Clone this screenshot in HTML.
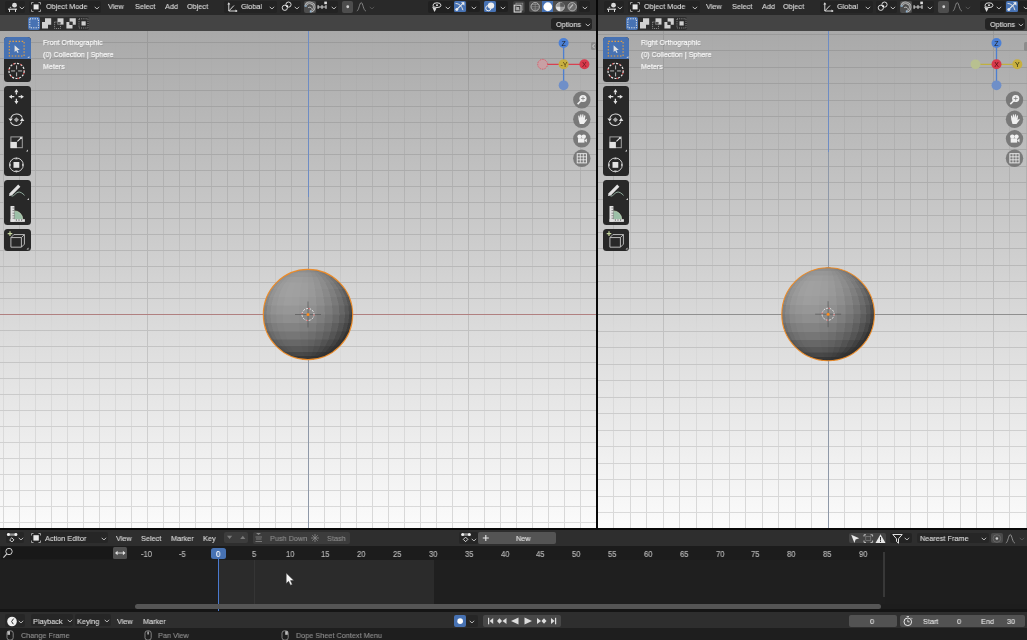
<!DOCTYPE html><html><head><meta charset="utf-8"><style>
*{margin:0;padding:0;box-sizing:border-box}
body{width:1027px;height:640px;overflow:hidden;background:#1f1f1f;position:relative;font-family:"Liberation Sans",sans-serif;}
.a{position:absolute}
.t{position:absolute;white-space:nowrap;will-change:transform;transform:scaleX(0.9);transform-origin:0 0;-webkit-text-stroke:0.15px currentColor}
</style></head><body>
<svg class="a" style="left:0px;top:31px" width="596" height="497" viewBox="0 0 596 497" shape-rendering="crispEdges"><defs><linearGradient id="bg0" x1="0" y1="0" x2="0" y2="1"><stop offset="0" stop-color="#a9a9a9"/><stop offset="0.5" stop-color="#d3d3d3"/><stop offset="1" stop-color="#fbfbfb"/></linearGradient><linearGradient id="hg0" x1="0" y1="0" x2="0" y2="497" gradientUnits="userSpaceOnUse"><stop offset="0" stop-color="#999999"/><stop offset="1" stop-color="#dcdcdc"/></linearGradient><linearGradient id="vg0" x1="0" y1="0" x2="0" y2="497" gradientUnits="userSpaceOnUse"><stop offset="0" stop-color="#a2a2a2" stop-opacity="0.05"/><stop offset="0.12" stop-color="#a2a2a2" stop-opacity="0.25"/><stop offset="0.3" stop-color="#a2a2a2" stop-opacity="0.55"/><stop offset="0.6" stop-color="#d8d8d8" stop-opacity="0.85"/><stop offset="1" stop-color="#d8d8d8" stop-opacity="1"/></linearGradient></defs><rect width="596" height="497" fill="url(#bg0)"/><path d="M3 0h1V497h-1zM19 0h1V497h-1zM35 0h1V497h-1zM51 0h1V497h-1zM67 0h1V497h-1zM83 0h1V497h-1zM99 0h1V497h-1zM115 0h1V497h-1zM131 0h1V497h-1zM163 0h1V497h-1zM179 0h1V497h-1zM195 0h1V497h-1zM211 0h1V497h-1zM227 0h1V497h-1zM243 0h1V497h-1zM259 0h1V497h-1zM275 0h1V497h-1zM291 0h1V497h-1zM324 0h1V497h-1zM340 0h1V497h-1zM356 0h1V497h-1zM372 0h1V497h-1zM388 0h1V497h-1zM404 0h1V497h-1zM420 0h1V497h-1zM436 0h1V497h-1zM452 0h1V497h-1zM484 0h1V497h-1zM500 0h1V497h-1zM516 0h1V497h-1zM532 0h1V497h-1zM548 0h1V497h-1zM564 0h1V497h-1zM580 0h1V497h-1z" fill="url(#vg0)"/><path d="M147 0h1V497h-1zM468 0h1V497h-1z" fill="url(#hg0)"/><path d="M0 11v1H596v-1zM0 27v1H596v-1zM0 43v1H596v-1zM0 59v1H596v-1zM0 75v1H596v-1zM0 91v1H596v-1zM0 107v1H596v-1zM0 123v1H596v-1zM0 139v1H596v-1zM0 155v1H596v-1zM0 171v1H596v-1zM0 187v1H596v-1zM0 203v1H596v-1zM0 219v1H596v-1zM0 235v1H596v-1zM0 251v1H596v-1zM0 267v1H596v-1zM0 299v1H596v-1zM0 315v1H596v-1zM0 331v1H596v-1zM0 347v1H596v-1zM0 363v1H596v-1zM0 379v1H596v-1zM0 395v1H596v-1zM0 411v1H596v-1zM0 427v1H596v-1zM0 443v1H596v-1zM0 459v1H596v-1zM0 475v1H596v-1zM0 491v1H596v-1z" fill="url(#hg0)"/><rect x="0" y="283" width="596" height="1" fill="#b08080"/><rect x="308" y="0" width="1" height="166" fill="#6d8cc4"/><rect x="308" y="166" width="1" height="331" fill="#8e98a8"/></svg>
<svg class="a" style="left:598px;top:31px" width="429" height="497" viewBox="0 0 429 497" shape-rendering="crispEdges"><defs><linearGradient id="bg598" x1="0" y1="0" x2="0" y2="1"><stop offset="0" stop-color="#a9a9a9"/><stop offset="0.5" stop-color="#d3d3d3"/><stop offset="1" stop-color="#fbfbfb"/></linearGradient><linearGradient id="hg598" x1="0" y1="0" x2="0" y2="497" gradientUnits="userSpaceOnUse"><stop offset="0" stop-color="#999999"/><stop offset="1" stop-color="#dcdcdc"/></linearGradient><linearGradient id="vg598" x1="0" y1="0" x2="0" y2="497" gradientUnits="userSpaceOnUse"><stop offset="0" stop-color="#a2a2a2" stop-opacity="0.05"/><stop offset="0.12" stop-color="#a2a2a2" stop-opacity="0.25"/><stop offset="0.3" stop-color="#a2a2a2" stop-opacity="0.55"/><stop offset="0.6" stop-color="#d8d8d8" stop-opacity="0.85"/><stop offset="1" stop-color="#d8d8d8" stop-opacity="1"/></linearGradient></defs><rect width="429" height="497" fill="url(#bg598)"/><path d="M15 0h1V497h-1zM32 0h1V497h-1zM48 0h1V497h-1zM81 0h1V497h-1zM98 0h1V497h-1zM114 0h1V497h-1zM131 0h1V497h-1zM147 0h1V497h-1zM164 0h1V497h-1zM180 0h1V497h-1zM197 0h1V497h-1zM213 0h1V497h-1zM246 0h1V497h-1zM263 0h1V497h-1zM279 0h1V497h-1zM296 0h1V497h-1zM312 0h1V497h-1zM329 0h1V497h-1zM345 0h1V497h-1zM362 0h1V497h-1zM378 0h1V497h-1zM411 0h1V497h-1zM428 0h1V497h-1z" fill="url(#vg598)"/><path d="M65 0h1V497h-1zM395 0h1V497h-1z" fill="url(#hg598)"/><path d="M0 3v1H429v-1zM0 19v1H429v-1zM0 36v1H429v-1zM0 52v1H429v-1zM0 69v1H429v-1zM0 85v1H429v-1zM0 102v1H429v-1zM0 118v1H429v-1zM0 135v1H429v-1zM0 151v1H429v-1zM0 168v1H429v-1zM0 184v1H429v-1zM0 201v1H429v-1zM0 217v1H429v-1zM0 234v1H429v-1zM0 250v1H429v-1zM0 267v1H429v-1zM0 300v1H429v-1zM0 316v1H429v-1zM0 333v1H429v-1zM0 349v1H429v-1zM0 366v1H429v-1zM0 382v1H429v-1zM0 399v1H429v-1zM0 415v1H429v-1zM0 432v1H429v-1zM0 448v1H429v-1zM0 465v1H429v-1zM0 481v1H429v-1z" fill="url(#hg598)"/><rect x="0" y="283" width="429" height="1" fill="#8f8f8f"/><rect x="230" y="0" width="1" height="121" fill="#6d8cc4"/><rect x="230" y="121" width="1" height="376" fill="#8e98a8"/></svg>
<div class="a" style="left:0px;top:0px;width:1027px;height:14.7px;background:#292929;border-radius:0px;"></div>
<div class="a" style="left:0px;top:14.7px;width:1027px;height:16.8px;background:#444444;border-radius:0px;"></div>
<div class="a" style="left:596px;top:0px;width:2px;height:528px;background:#080808;border-radius:0px;"></div>
<div class="a" style="left:0px;top:527.5px;width:1027px;height:2.0px;background:#080808;border-radius:0px;"></div>
<div class="a" style="left:5px;top:1px;width:20px;height:11.5px;background:#232323;border-radius:2px;"></div>
<div class="a" style="left:29px;top:1px;width:72px;height:11.5px;background:#232323;border-radius:2px;"></div>
<div class="a" style="left:224px;top:1px;width:53px;height:11.5px;background:#232323;border-radius:2px;"></div>
<div class="a" style="left:279.5px;top:1px;width:21.0px;height:11.5px;background:#232323;border-radius:2px;"></div>
<div class="a" style="left:316px;top:1px;width:22px;height:11.5px;background:#232323;border-radius:2px;"></div>
<div class="a" style="left:428px;top:1px;width:25.5px;height:11.5px;background:#202020;border-radius:2px;"></div>
<div class="a" style="left:466.5px;top:1.2px;width:13.5px;height:11.200000000000001px;background:#202020;border-radius:2px;"></div>
<svg class="a" style="left:7px;top:1px;" width="12" height="12" viewBox="0 0 12 12"><circle cx="7.5" cy="4.2" r="2.4" fill="#d9d9d9"/><rect x="1" y="7.6" width="9" height="1.2" fill="#d9d9d9"/><rect x="2" y="8" width="1" height="3" fill="#d9d9d9"/><rect x="8" y="8" width="1" height="3" fill="#d9d9d9"/><path d="M2.5 7L3.5 5.5L4.5 7z" fill="#aaa"/></svg>
<svg class="a" style="left:18.5px;top:5.6px;" width="6" height="4" viewBox="0 0 6 4"><path d="M0.7 0.8L2.9 3L5.1 0.8" stroke="#bdbdbd" stroke-width="1" fill="none"/></svg>
<svg class="a" style="left:31px;top:1.5px;" width="11" height="10" viewBox="0 0 11 10"><path d="M0.5 2.5V0.5H2.5M7.5 0.5H9.5V2.5M9.5 7.5V9.5H7.5M2.5 9.5H0.5V7.5" stroke="#aaa" stroke-width="0.9" fill="none"/><rect x="2.6" y="2.4" width="5" height="5" fill="#e6e6e6"/></svg>
<div class="t" style="left:45.7px;top:2.79px;font-size:8.1px;line-height:8.1px;color:#d8d8d8;">Object Mode</div>
<svg class="a" style="left:93.5px;top:5.6px;" width="6" height="4" viewBox="0 0 6 4"><path d="M0.7 0.8L2.9 3L5.1 0.8" stroke="#bdbdbd" stroke-width="1" fill="none"/></svg>
<div class="t" style="left:108.3px;top:2.79px;font-size:8.1px;line-height:8.1px;color:#d8d8d8;">View</div>
<div class="t" style="left:134.6px;top:2.79px;font-size:8.1px;line-height:8.1px;color:#d8d8d8;">Select</div>
<div class="t" style="left:165.0px;top:2.79px;font-size:8.1px;line-height:8.1px;color:#d8d8d8;">Add</div>
<div class="t" style="left:187.2px;top:2.79px;font-size:8.1px;line-height:8.1px;color:#d8d8d8;">Object</div>
<svg class="a" style="left:227px;top:1.5px;" width="11" height="10" viewBox="0 0 11 10"><path d="M1.8 9V1.5M1.8 9H9.5M1.8 9L7 3.5" stroke="#d9d9d9" stroke-width="1" fill="none"/><path d="M0.3 2.5L1.8 0.3L3.3 2.5z M8.5 7.5L10.7 9L8.5 10.5z" fill="#d9d9d9"/></svg>
<div class="t" style="left:241px;top:2.79px;font-size:8.1px;line-height:8.1px;color:#d8d8d8;">Global</div>
<svg class="a" style="left:269px;top:5.6px;" width="6" height="4" viewBox="0 0 6 4"><path d="M0.7 0.8L2.9 3L5.1 0.8" stroke="#bdbdbd" stroke-width="1" fill="none"/></svg>
<svg class="a" style="left:281px;top:1px;" width="12" height="12" viewBox="0 0 12 12"><circle cx="3.8" cy="6.8" r="2.6" stroke="#d9d9d9" stroke-width="1" fill="none"/><circle cx="7.5" cy="3.6" r="2.6" stroke="#d9d9d9" stroke-width="1" fill="none"/><circle cx="6.3" cy="5.1" r="0.9" fill="#fff"/></svg>
<svg class="a" style="left:293.5px;top:5.6px;" width="6" height="4" viewBox="0 0 6 4"><path d="M0.7 0.8L2.9 3L5.1 0.8" stroke="#bdbdbd" stroke-width="1" fill="none"/></svg>
<div class="a" style="left:304px;top:1px;width:12px;height:11.5px;background:#4d4d4d;border-radius:2px;"></div>
<svg class="a" style="left:304px;top:1px;" width="12" height="11.5" viewBox="0 0 12 11.5"><path d="M1.6 5A4.4 4.4 0 0 1 10.2 6.6A4.4 4.4 0 0 1 6.6 10.4" stroke="#b8b8b8" stroke-width="2.4" fill="none"/><path d="M1.6 5A4.4 4.4 0 0 1 10.2 6.6A4.4 4.4 0 0 1 6.6 10.4" stroke="#4d4d4d" stroke-width="0.7" fill="none"/><path d="M4 7A2 2 0 0 1 7.6 7.6" stroke="#b8b8b8" stroke-width="1" fill="none"/><rect x="0.6" y="4.4" width="2" height="1.4" fill="#8ab0d0"/><rect x="5.8" y="9.6" width="1.6" height="1.8" fill="#8ab0d0"/></svg>
<svg class="a" style="left:317px;top:1px;" width="11" height="11" viewBox="0 0 11 11"><rect x="0.5" y="5.5" width="9" height="1" fill="#cfcfcf"/><rect x="0.6" y="4" width="1" height="4" fill="#cfcfcf"/><rect x="4.5" y="4" width="1" height="4" fill="#cfcfcf"/><rect x="8.5" y="4" width="1" height="4" fill="#cfcfcf"/><rect x="7.3" y="0.6" width="2.6" height="2.6" fill="#e0e0e0"/></svg>
<svg class="a" style="left:331px;top:5.6px;" width="6" height="4" viewBox="0 0 6 4"><path d="M0.7 0.8L2.9 3L5.1 0.8" stroke="#bdbdbd" stroke-width="1" fill="none"/></svg>
<div class="a" style="left:341.5px;top:1px;width:11.5px;height:11.5px;background:#4d4d4d;border-radius:2px;"></div>
<svg class="a" style="left:341.5px;top:1px;" width="11.5" height="11.5" viewBox="0 0 11.5 11.5"><circle cx="5.75" cy="5.75" r="1.4" fill="#cfcfcf"/></svg>
<svg class="a" style="left:356px;top:1px;" width="11" height="11" viewBox="0 0 11 11"><path d="M0.8 10C3 9.5 3.4 2 5.2 1.5C7 2 7.4 9.5 9.8 10" stroke="#8a8a8a" stroke-width="0.9" fill="none"/></svg>
<svg class="a" style="left:368.5px;top:5.6px;" width="6" height="4" viewBox="0 0 6 4"><path d="M0.7 0.8L2.9 3L5.1 0.8" stroke="#555" stroke-width="1" fill="none"/></svg>
<svg class="a" style="left:431px;top:1.5px;" width="11" height="10" viewBox="0 0 11 10"><ellipse cx="6" cy="3.2" rx="4" ry="2.4" stroke="#d9d9d9" stroke-width="1" fill="none"/><circle cx="6" cy="3.2" r="1" fill="#d9d9d9"/><path d="M1 4.5L5.5 6.5L3.5 10z" fill="#d9d9d9"/></svg>
<svg class="a" style="left:444.5px;top:5.6px;" width="6" height="4" viewBox="0 0 6 4"><path d="M0.7 0.8L2.9 3L5.1 0.8" stroke="#bdbdbd" stroke-width="1" fill="none"/></svg>
<div class="a" style="left:454px;top:1.2px;width:12px;height:11.200000000000001px;background:#4772b3;border-radius:1.5px;"></div>
<svg class="a" style="left:454px;top:1.2px;" width="12" height="11.2" viewBox="0 0 12 11.2"><path d="M2.6 8.6L9.8 1.6" stroke="#eeeeee" stroke-width="1.1"/><path d="M7 1.3H10.4V4.7z" fill="#eeeeee"/><path d="M1.5 2.4Q7 2.6 9 9.2" stroke="#e0e0e0" stroke-width="1" fill="none"/><circle cx="2.8" cy="8.4" r="1.5" fill="#eeeeee"/></svg>
<svg class="a" style="left:471px;top:5.6px;" width="6" height="4" viewBox="0 0 6 4"><path d="M0.7 0.8L2.9 3L5.1 0.8" stroke="#bdbdbd" stroke-width="1" fill="none"/></svg>
<div class="a" style="left:495.5px;top:1.2px;width:12.0px;height:11.200000000000001px;background:#202020;border-radius:2px;"></div>
<div class="a" style="left:484px;top:1.2px;width:12px;height:11.200000000000001px;background:#4772b3;border-radius:1.5px;"></div>
<svg class="a" style="left:484px;top:1.2px;" width="12" height="11.2" viewBox="0 0 12 11.2"><circle cx="7" cy="4.6" r="3.2" fill="#eeeeee"/><circle cx="4.3" cy="7.2" r="2.6" stroke="#eeeeee" stroke-width="1" fill="none"/></svg>
<svg class="a" style="left:500px;top:5.6px;" width="6" height="4" viewBox="0 0 6 4"><path d="M0.7 0.8L2.9 3L5.1 0.8" stroke="#bdbdbd" stroke-width="1" fill="none"/></svg>
<div class="a" style="left:512.5px;top:1px;width:12.0px;height:11.5px;background:#3a3a3a;border-radius:2px;"></div>
<svg class="a" style="left:513px;top:1.5px;" width="11" height="11" viewBox="0 0 11 11"><rect x="1.2" y="3.2" width="6.8" height="6.8" stroke="#d8d8d8" stroke-width="1.1" fill="none"/><rect x="3" y="1.2" width="6.8" height="6.8" stroke="#8a8a8a" stroke-width="0.9" fill="none"/><rect x="3.2" y="5" width="3" height="3" fill="#aaa"/></svg>
<div class="a" style="left:528.5px;top:0.9px;width:48.700000000000045px;height:11.5px;background:#4d4d4d;border-radius:2px;"></div>
<div class="a" style="left:541.8px;top:0.9px;width:11.0px;height:11.5px;background:#4772b3;border-radius:0px;"></div>
<svg class="a" style="left:528.5px;top:0.9px;" width="49" height="11.5" viewBox="0 0 49 11.5"><circle cx="6.2" cy="5.75" r="4.2" stroke="#bdbdbd" stroke-width="0.9" fill="none"/><path d="M2 5.75H10.4M6.2 1.6V9.9M3 3.5H9.4M3 8H9.4" stroke="#999" stroke-width="0.6"/><circle cx="18.8" cy="5.75" r="4.4" fill="#ffffff"/><circle cx="31.2" cy="5.75" r="4.2" fill="#9a9a9a" stroke="#c8c8c8" stroke-width="0.8"/><path d="M31.2 1.6V5.75H35.4A4.2 4.2 0 0 0 31.2 1.6z" fill="#5a5a5a"/><path d="M31.2 5.75V9.9A4.2 4.2 0 0 1 27 5.75z" fill="#e0e0e0"/><circle cx="43.2" cy="5.75" r="4.2" fill="#6c6c6c" stroke="#bdbdbd" stroke-width="0.8"/><path d="M40.5 7.5L44 3.5" stroke="#bdbdbd" stroke-width="1.2"/></svg>
<div class="a" style="left:578.5px;top:0.9px;width:11.100000000000023px;height:11.5px;background:#222;border-radius:2px;"></div>
<svg class="a" style="left:581.5px;top:5.6px;" width="6" height="4" viewBox="0 0 6 4"><path d="M0.7 0.8L2.9 3L5.1 0.8" stroke="#bdbdbd" stroke-width="1" fill="none"/></svg>
<div class="a" style="left:603.6px;top:1px;width:20.0px;height:11.5px;background:#232323;border-radius:2px;"></div>
<div class="a" style="left:627.6px;top:1px;width:72.0px;height:11.5px;background:#232323;border-radius:2px;"></div>
<div class="a" style="left:820.0px;top:1px;width:53.0px;height:11.5px;background:#232323;border-radius:2px;"></div>
<div class="a" style="left:875.5px;top:1px;width:21.0px;height:11.5px;background:#232323;border-radius:2px;"></div>
<div class="a" style="left:912.0px;top:1px;width:22.0px;height:11.5px;background:#232323;border-radius:2px;"></div>
<div class="a" style="left:979.5px;top:1px;width:25.5px;height:11.5px;background:#202020;border-radius:2px;"></div>
<div class="a" style="left:1018.0px;top:1.2px;width:13.5px;height:11.200000000000001px;background:#202020;border-radius:2px;"></div>
<svg class="a" style="left:605.6px;top:1px;" width="12" height="12" viewBox="0 0 12 12"><circle cx="7.5" cy="4.2" r="2.4" fill="#d9d9d9"/><rect x="1" y="7.6" width="9" height="1.2" fill="#d9d9d9"/><rect x="2" y="8" width="1" height="3" fill="#d9d9d9"/><rect x="8" y="8" width="1" height="3" fill="#d9d9d9"/><path d="M2.5 7L3.5 5.5L4.5 7z" fill="#aaa"/></svg>
<svg class="a" style="left:617.1px;top:5.6px;" width="6" height="4" viewBox="0 0 6 4"><path d="M0.7 0.8L2.9 3L5.1 0.8" stroke="#bdbdbd" stroke-width="1" fill="none"/></svg>
<svg class="a" style="left:629.6px;top:1.5px;" width="11" height="10" viewBox="0 0 11 10"><path d="M0.5 2.5V0.5H2.5M7.5 0.5H9.5V2.5M9.5 7.5V9.5H7.5M2.5 9.5H0.5V7.5" stroke="#aaa" stroke-width="0.9" fill="none"/><rect x="2.6" y="2.4" width="5" height="5" fill="#e6e6e6"/></svg>
<div class="t" style="left:644.3000000000001px;top:2.79px;font-size:8.1px;line-height:8.1px;color:#d8d8d8;">Object Mode</div>
<svg class="a" style="left:692.1px;top:5.6px;" width="6" height="4" viewBox="0 0 6 4"><path d="M0.7 0.8L2.9 3L5.1 0.8" stroke="#bdbdbd" stroke-width="1" fill="none"/></svg>
<div class="t" style="left:706.3px;top:2.79px;font-size:8.1px;line-height:8.1px;color:#d8d8d8;">View</div>
<div class="t" style="left:731.9px;top:2.79px;font-size:8.1px;line-height:8.1px;color:#d8d8d8;">Select</div>
<div class="t" style="left:761.8px;top:2.79px;font-size:8.1px;line-height:8.1px;color:#d8d8d8;">Add</div>
<div class="t" style="left:783.3px;top:2.79px;font-size:8.1px;line-height:8.1px;color:#d8d8d8;">Object</div>
<svg class="a" style="left:823.0px;top:1.5px;" width="11" height="10" viewBox="0 0 11 10"><path d="M1.8 9V1.5M1.8 9H9.5M1.8 9L7 3.5" stroke="#d9d9d9" stroke-width="1" fill="none"/><path d="M0.3 2.5L1.8 0.3L3.3 2.5z M8.5 7.5L10.7 9L8.5 10.5z" fill="#d9d9d9"/></svg>
<div class="t" style="left:837.0px;top:2.79px;font-size:8.1px;line-height:8.1px;color:#d8d8d8;">Global</div>
<svg class="a" style="left:865.0px;top:5.6px;" width="6" height="4" viewBox="0 0 6 4"><path d="M0.7 0.8L2.9 3L5.1 0.8" stroke="#bdbdbd" stroke-width="1" fill="none"/></svg>
<svg class="a" style="left:877.0px;top:1px;" width="12" height="12" viewBox="0 0 12 12"><circle cx="3.8" cy="6.8" r="2.6" stroke="#d9d9d9" stroke-width="1" fill="none"/><circle cx="7.5" cy="3.6" r="2.6" stroke="#d9d9d9" stroke-width="1" fill="none"/><circle cx="6.3" cy="5.1" r="0.9" fill="#fff"/></svg>
<svg class="a" style="left:889.5px;top:5.6px;" width="6" height="4" viewBox="0 0 6 4"><path d="M0.7 0.8L2.9 3L5.1 0.8" stroke="#bdbdbd" stroke-width="1" fill="none"/></svg>
<div class="a" style="left:900.0px;top:1px;width:12.0px;height:11.5px;background:#4d4d4d;border-radius:2px;"></div>
<svg class="a" style="left:900.0px;top:1px;" width="12" height="11.5" viewBox="0 0 12 11.5"><path d="M1.6 5A4.4 4.4 0 0 1 10.2 6.6A4.4 4.4 0 0 1 6.6 10.4" stroke="#b8b8b8" stroke-width="2.4" fill="none"/><path d="M1.6 5A4.4 4.4 0 0 1 10.2 6.6A4.4 4.4 0 0 1 6.6 10.4" stroke="#4d4d4d" stroke-width="0.7" fill="none"/><path d="M4 7A2 2 0 0 1 7.6 7.6" stroke="#b8b8b8" stroke-width="1" fill="none"/><rect x="0.6" y="4.4" width="2" height="1.4" fill="#8ab0d0"/><rect x="5.8" y="9.6" width="1.6" height="1.8" fill="#8ab0d0"/></svg>
<svg class="a" style="left:913.0px;top:1px;" width="11" height="11" viewBox="0 0 11 11"><rect x="0.5" y="5.5" width="9" height="1" fill="#cfcfcf"/><rect x="0.6" y="4" width="1" height="4" fill="#cfcfcf"/><rect x="4.5" y="4" width="1" height="4" fill="#cfcfcf"/><rect x="8.5" y="4" width="1" height="4" fill="#cfcfcf"/><rect x="7.3" y="0.6" width="2.6" height="2.6" fill="#e0e0e0"/></svg>
<svg class="a" style="left:927.0px;top:5.6px;" width="6" height="4" viewBox="0 0 6 4"><path d="M0.7 0.8L2.9 3L5.1 0.8" stroke="#bdbdbd" stroke-width="1" fill="none"/></svg>
<div class="a" style="left:937.5px;top:1px;width:11.5px;height:11.5px;background:#4d4d4d;border-radius:2px;"></div>
<svg class="a" style="left:937.5px;top:1px;" width="11.5" height="11.5" viewBox="0 0 11.5 11.5"><circle cx="5.75" cy="5.75" r="1.4" fill="#cfcfcf"/></svg>
<svg class="a" style="left:952.0px;top:1px;" width="11" height="11" viewBox="0 0 11 11"><path d="M0.8 10C3 9.5 3.4 2 5.2 1.5C7 2 7.4 9.5 9.8 10" stroke="#8a8a8a" stroke-width="0.9" fill="none"/></svg>
<svg class="a" style="left:964.5px;top:5.6px;" width="6" height="4" viewBox="0 0 6 4"><path d="M0.7 0.8L2.9 3L5.1 0.8" stroke="#555" stroke-width="1" fill="none"/></svg>
<svg class="a" style="left:982.5px;top:1.5px;" width="11" height="10" viewBox="0 0 11 10"><ellipse cx="6" cy="3.2" rx="4" ry="2.4" stroke="#d9d9d9" stroke-width="1" fill="none"/><circle cx="6" cy="3.2" r="1" fill="#d9d9d9"/><path d="M1 4.5L5.5 6.5L3.5 10z" fill="#d9d9d9"/></svg>
<svg class="a" style="left:996.0px;top:5.6px;" width="6" height="4" viewBox="0 0 6 4"><path d="M0.7 0.8L2.9 3L5.1 0.8" stroke="#bdbdbd" stroke-width="1" fill="none"/></svg>
<div class="a" style="left:1005.5px;top:1.2px;width:12.0px;height:11.200000000000001px;background:#4772b3;border-radius:1.5px;"></div>
<svg class="a" style="left:1005.5px;top:1.2px;" width="12" height="11.2" viewBox="0 0 12 11.2"><path d="M2.6 8.6L9.8 1.6" stroke="#eeeeee" stroke-width="1.1"/><path d="M7 1.3H10.4V4.7z" fill="#eeeeee"/><path d="M1.5 2.4Q7 2.6 9 9.2" stroke="#e0e0e0" stroke-width="1" fill="none"/><circle cx="2.8" cy="8.4" r="1.5" fill="#eeeeee"/></svg>
<svg class="a" style="left:1022.5px;top:5.6px;" width="6" height="4" viewBox="0 0 6 4"><path d="M0.7 0.8L2.9 3L5.1 0.8" stroke="#bdbdbd" stroke-width="1" fill="none"/></svg>
<div class="a" style="left:27.7px;top:17.4px;width:61.3px;height:12.600000000000001px;background:#2e2e2e;border-radius:2px;"></div>
<div class="a" style="left:27.7px;top:17.4px;width:12.3px;height:12.600000000000001px;background:#4772b3;border-radius:2px;"></div>
<svg class="a" style="left:27.7px;top:17.4px;" width="62" height="13" viewBox="0 0 62 13"><rect x="1.8" y="1.8" width="8.6" height="9" stroke="#e8e8e8" stroke-width="1" stroke-dasharray="1.2 1.2" fill="none"/><path d="M17 1.3H23.2V7.8H20V11.6H14V5H17z" fill="#d0d0d0"/><path d="M29.5 1.3H35.5V7.6H29.5z" fill="#d0d0d0"/><path d="M26.6 5H32.5V11.5H26.6z" stroke="#aaa" stroke-width="0.8" stroke-dasharray="1 1" fill="none"/><rect x="29.5" y="5" width="3" height="2.6" fill="#555"/><path d="M41.6 1.3H47.8V7.8H44.5V4.8H41.6z" fill="#d0d0d0"/><path d="M38.4 5H41.6V8H44.5V11.6H38.4z" fill="#d0d0d0"/><rect x="41.6" y="4.8" width="2.9" height="3" fill="#333"/><rect x="51" y="1.8" width="9" height="9.2" stroke="#aaa" stroke-width="0.8" stroke-dasharray="1 1.2" fill="none"/><rect x="53.5" y="4.3" width="4.2" height="4.2" fill="#d0d0d0"/></svg>
<div class="a" style="left:551.4px;top:18.4px;width:40.30000000000007px;height:11.400000000000002px;background:#242424;border-radius:3px;"></div>
<div class="t" style="left:555.8px;top:20.69px;font-size:8.1px;line-height:8.1px;color:#dcdcdc;">Options</div>
<svg class="a" style="left:584.5px;top:22.6px;" width="6" height="4" viewBox="0 0 6 4"><path d="M0.7 0.8L2.9 3L5.1 0.8" stroke="#bdbdbd" stroke-width="1" fill="none"/></svg>
<div class="a" style="left:626.2px;top:17.4px;width:61.299999999999955px;height:12.600000000000001px;background:#2e2e2e;border-radius:2px;"></div>
<div class="a" style="left:626.2px;top:17.4px;width:12.299999999999955px;height:12.600000000000001px;background:#4772b3;border-radius:2px;"></div>
<svg class="a" style="left:626.2px;top:17.4px;" width="62" height="13" viewBox="0 0 62 13"><rect x="1.8" y="1.8" width="8.6" height="9" stroke="#e8e8e8" stroke-width="1" stroke-dasharray="1.2 1.2" fill="none"/><path d="M17 1.3H23.2V7.8H20V11.6H14V5H17z" fill="#d0d0d0"/><path d="M29.5 1.3H35.5V7.6H29.5z" fill="#d0d0d0"/><path d="M26.6 5H32.5V11.5H26.6z" stroke="#aaa" stroke-width="0.8" stroke-dasharray="1 1" fill="none"/><rect x="29.5" y="5" width="3" height="2.6" fill="#555"/><path d="M41.6 1.3H47.8V7.8H44.5V4.8H41.6z" fill="#d0d0d0"/><path d="M38.4 5H41.6V8H44.5V11.6H38.4z" fill="#d0d0d0"/><rect x="41.6" y="4.8" width="2.9" height="3" fill="#333"/><rect x="51" y="1.8" width="9" height="9.2" stroke="#aaa" stroke-width="0.8" stroke-dasharray="1 1.2" fill="none"/><rect x="53.5" y="4.3" width="4.2" height="4.2" fill="#d0d0d0"/></svg>
<div class="a" style="left:984.6px;top:18.4px;width:40.39999999999998px;height:11.400000000000002px;background:#242424;border-radius:3px;"></div>
<div class="t" style="left:989.5px;top:20.69px;font-size:8.1px;line-height:8.1px;color:#dcdcdc;">Options</div>
<svg class="a" style="left:1017.5px;top:22.6px;" width="6" height="4" viewBox="0 0 6 4"><path d="M0.7 0.8L2.9 3L5.1 0.8" stroke="#bdbdbd" stroke-width="1" fill="none"/></svg>
<svg class="a" style="left:0;top:0" width="1027" height="640" viewBox="0 0 1027 640"><defs><clipPath id="cpL"><ellipse cx="308.0" cy="314.5" rx="44.7" ry="45.1"/></clipPath></defs>
<g clip-path="url(#cpL)" shape-rendering="crispEdges"><path d="M308.0 269.4L308.0 269.4L299.4 270.3L299.3 270.3z" fill="#808080" stroke="#808080" stroke-width="0.5"/><path d="M308.0 269.4L308.0 269.4L299.9 270.3L299.4 270.3z" fill="#818181" stroke="#818181" stroke-width="0.5"/><path d="M308.0 269.4L308.0 269.4L300.7 270.3L299.9 270.3z" fill="#828282" stroke="#828282" stroke-width="0.5"/><path d="M308.0 269.4L308.0 269.4L301.8 270.3L300.7 270.3z" fill="#828282" stroke="#828282" stroke-width="0.5"/><path d="M308.0 269.4L308.0 269.4L303.2 270.3L301.8 270.3z" fill="#838383" stroke="#838383" stroke-width="0.5"/><path d="M308.0 269.4L308.0 269.4L304.7 270.3L303.2 270.3z" fill="#838383" stroke="#838383" stroke-width="0.5"/><path d="M308.0 269.4L308.0 269.4L306.3 270.3L304.7 270.3z" fill="#838383" stroke="#838383" stroke-width="0.5"/><path d="M308.0 269.4L308.0 269.4L308.0 270.3L306.3 270.3z" fill="#838383" stroke="#838383" stroke-width="0.5"/><path d="M308.0 269.4L308.0 269.4L309.7 270.3L308.0 270.3z" fill="#828282" stroke="#828282" stroke-width="0.5"/><path d="M308.0 269.4L308.0 269.4L311.3 270.3L309.7 270.3z" fill="#818181" stroke="#818181" stroke-width="0.5"/><path d="M308.0 269.4L308.0 269.4L312.8 270.3L311.3 270.3z" fill="#808080" stroke="#808080" stroke-width="0.5"/><path d="M308.0 269.4L308.0 269.4L314.2 270.3L312.8 270.3z" fill="#7f7f7f" stroke="#7f7f7f" stroke-width="0.5"/><path d="M308.0 269.4L308.0 269.4L315.3 270.3L314.2 270.3z" fill="#7e7e7e" stroke="#7e7e7e" stroke-width="0.5"/><path d="M308.0 269.4L308.0 269.4L316.1 270.3L315.3 270.3z" fill="#7d7d7d" stroke="#7d7d7d" stroke-width="0.5"/><path d="M308.0 269.4L308.0 269.4L316.6 270.3L316.1 270.3z" fill="#7b7b7b" stroke="#7b7b7b" stroke-width="0.5"/><path d="M308.0 269.4L308.0 269.4L316.7 270.3L316.6 270.3z" fill="#7a7a7a" stroke="#7a7a7a" stroke-width="0.5"/><path d="M299.3 270.3L299.4 270.3L291.2 272.8L290.9 272.8z" fill="#848484" stroke="#848484" stroke-width="0.5"/><path d="M299.4 270.3L299.9 270.3L292.2 272.8L291.2 272.8z" fill="#888888" stroke="#888888" stroke-width="0.5"/><path d="M299.9 270.3L300.7 270.3L293.8 272.8L292.2 272.8z" fill="#8a8a8a" stroke="#8a8a8a" stroke-width="0.5"/><path d="M300.7 270.3L301.8 270.3L295.9 272.8L293.8 272.8z" fill="#8c8c8c" stroke="#8c8c8c" stroke-width="0.5"/><path d="M301.8 270.3L303.2 270.3L298.5 272.8L295.9 272.8z" fill="#8e8e8e" stroke="#8e8e8e" stroke-width="0.5"/><path d="M303.2 270.3L304.7 270.3L301.5 272.8L298.5 272.8z" fill="#8e8e8e" stroke="#8e8e8e" stroke-width="0.5"/><path d="M304.7 270.3L306.3 270.3L304.7 272.8L301.5 272.8z" fill="#8e8e8e" stroke="#8e8e8e" stroke-width="0.5"/><path d="M306.3 270.3L308.0 270.3L308.0 272.8L304.7 272.8z" fill="#8d8d8d" stroke="#8d8d8d" stroke-width="0.5"/><path d="M308.0 270.3L309.7 270.3L311.3 272.8L308.0 272.8z" fill="#8c8c8c" stroke="#8c8c8c" stroke-width="0.5"/><path d="M309.7 270.3L311.3 270.3L314.5 272.8L311.3 272.8z" fill="#898989" stroke="#898989" stroke-width="0.5"/><path d="M311.3 270.3L312.8 270.3L317.5 272.8L314.5 272.8z" fill="#878787" stroke="#878787" stroke-width="0.5"/><path d="M312.8 270.3L314.2 270.3L320.1 272.8L317.5 272.8z" fill="#838383" stroke="#838383" stroke-width="0.5"/><path d="M314.2 270.3L315.3 270.3L322.2 272.8L320.1 272.8z" fill="#808080" stroke="#808080" stroke-width="0.5"/><path d="M315.3 270.3L316.1 270.3L323.8 272.8L322.2 272.8z" fill="#7c7c7c" stroke="#7c7c7c" stroke-width="0.5"/><path d="M316.1 270.3L316.6 270.3L324.8 272.8L323.8 272.8z" fill="#787878" stroke="#787878" stroke-width="0.5"/><path d="M316.6 270.3L316.7 270.3L325.1 272.8L324.8 272.8z" fill="#747474" stroke="#747474" stroke-width="0.5"/><path d="M290.9 272.8L291.2 272.8L283.6 277.0L283.2 277.0z" fill="#878787" stroke="#878787" stroke-width="0.5"/><path d="M291.2 272.8L292.2 272.8L285.1 277.0L283.6 277.0z" fill="#8c8c8c" stroke="#8c8c8c" stroke-width="0.5"/><path d="M292.2 272.8L293.8 272.8L287.4 277.0L285.1 277.0z" fill="#919191" stroke="#919191" stroke-width="0.5"/><path d="M293.8 272.8L295.9 272.8L290.4 277.0L287.4 277.0z" fill="#949494" stroke="#949494" stroke-width="0.5"/><path d="M295.9 272.8L298.5 272.8L294.2 277.0L290.4 277.0z" fill="#969696" stroke="#969696" stroke-width="0.5"/><path d="M298.5 272.8L301.5 272.8L298.5 277.0L294.2 277.0z" fill="#979797" stroke="#979797" stroke-width="0.5"/><path d="M301.5 272.8L304.7 272.8L303.2 277.0L298.5 277.0z" fill="#979797" stroke="#979797" stroke-width="0.5"/><path d="M304.7 272.8L308.0 272.8L308.0 277.0L303.2 277.0z" fill="#969696" stroke="#969696" stroke-width="0.5"/><path d="M308.0 272.8L311.3 272.8L312.8 277.0L308.0 277.0z" fill="#939393" stroke="#939393" stroke-width="0.5"/><path d="M311.3 272.8L314.5 272.8L317.5 277.0L312.8 277.0z" fill="#8f8f8f" stroke="#8f8f8f" stroke-width="0.5"/><path d="M314.5 272.8L317.5 272.8L321.8 277.0L317.5 277.0z" fill="#8b8b8b" stroke="#8b8b8b" stroke-width="0.5"/><path d="M317.5 272.8L320.1 272.8L325.6 277.0L321.8 277.0z" fill="#858585" stroke="#858585" stroke-width="0.5"/><path d="M320.1 272.8L322.2 272.8L328.6 277.0L325.6 277.0z" fill="#808080" stroke="#808080" stroke-width="0.5"/><path d="M322.2 272.8L323.8 272.8L330.9 277.0L328.6 277.0z" fill="#797979" stroke="#797979" stroke-width="0.5"/><path d="M323.8 272.8L324.8 272.8L332.4 277.0L330.9 277.0z" fill="#737373" stroke="#737373" stroke-width="0.5"/><path d="M324.8 272.8L325.1 272.8L332.8 277.0L332.4 277.0z" fill="#6d6d6d" stroke="#6d6d6d" stroke-width="0.5"/><path d="M283.2 277.0L283.6 277.0L277.0 282.6L276.4 282.6z" fill="#888888" stroke="#888888" stroke-width="0.5"/><path d="M283.6 277.0L285.1 277.0L278.8 282.6L277.0 282.6z" fill="#8f8f8f" stroke="#8f8f8f" stroke-width="0.5"/><path d="M285.1 277.0L287.4 277.0L281.7 282.6L278.8 282.6z" fill="#949494" stroke="#949494" stroke-width="0.5"/><path d="M287.4 277.0L290.4 277.0L285.6 282.6L281.7 282.6z" fill="#999999" stroke="#999999" stroke-width="0.5"/><path d="M290.4 277.0L294.2 277.0L290.4 282.6L285.6 282.6z" fill="#9c9c9c" stroke="#9c9c9c" stroke-width="0.5"/><path d="M294.2 277.0L298.5 277.0L295.9 282.6L290.4 282.6z" fill="#9d9d9d" stroke="#9d9d9d" stroke-width="0.5"/><path d="M298.5 277.0L303.2 277.0L301.8 282.6L295.9 282.6z" fill="#9d9d9d" stroke="#9d9d9d" stroke-width="0.5"/><path d="M303.2 277.0L308.0 277.0L308.0 282.6L301.8 282.6z" fill="#9b9b9b" stroke="#9b9b9b" stroke-width="0.5"/><path d="M308.0 277.0L312.8 277.0L314.2 282.6L308.0 282.6z" fill="#989898" stroke="#989898" stroke-width="0.5"/><path d="M312.8 277.0L317.5 277.0L320.1 282.6L314.2 282.6z" fill="#939393" stroke="#939393" stroke-width="0.5"/><path d="M317.5 277.0L321.8 277.0L325.6 282.6L320.1 282.6z" fill="#8d8d8d" stroke="#8d8d8d" stroke-width="0.5"/><path d="M321.8 277.0L325.6 277.0L330.4 282.6L325.6 282.6z" fill="#858585" stroke="#858585" stroke-width="0.5"/><path d="M325.6 277.0L328.6 277.0L334.3 282.6L330.4 282.6z" fill="#7e7e7e" stroke="#7e7e7e" stroke-width="0.5"/><path d="M328.6 277.0L330.9 277.0L337.2 282.6L334.3 282.6z" fill="#757575" stroke="#757575" stroke-width="0.5"/><path d="M330.9 277.0L332.4 277.0L339.0 282.6L337.2 282.6z" fill="#6d6d6d" stroke="#6d6d6d" stroke-width="0.5"/><path d="M332.4 277.0L332.8 277.0L339.6 282.6L339.0 282.6z" fill="#646464" stroke="#646464" stroke-width="0.5"/><path d="M276.4 282.6L277.0 282.6L271.5 289.4L270.8 289.4z" fill="#868686" stroke="#868686" stroke-width="0.5"/><path d="M277.0 282.6L278.8 282.6L273.7 289.4L271.5 289.4z" fill="#8f8f8f" stroke="#8f8f8f" stroke-width="0.5"/><path d="M278.8 282.6L281.7 282.6L277.1 289.4L273.7 289.4z" fill="#969696" stroke="#969696" stroke-width="0.5"/><path d="M281.7 282.6L285.6 282.6L281.7 289.4L277.1 289.4z" fill="#9b9b9b" stroke="#9b9b9b" stroke-width="0.5"/><path d="M285.6 282.6L290.4 282.6L287.4 289.4L281.7 289.4z" fill="#9f9f9f" stroke="#9f9f9f" stroke-width="0.5"/><path d="M290.4 282.6L295.9 282.6L293.8 289.4L287.4 289.4z" fill="#a1a1a1" stroke="#a1a1a1" stroke-width="0.5"/><path d="M295.9 282.6L301.8 282.6L300.7 289.4L293.8 289.4z" fill="#a0a0a0" stroke="#a0a0a0" stroke-width="0.5"/><path d="M301.8 282.6L308.0 282.6L308.0 289.4L300.7 289.4z" fill="#9e9e9e" stroke="#9e9e9e" stroke-width="0.5"/><path d="M308.0 282.6L314.2 282.6L315.3 289.4L308.0 289.4z" fill="#9a9a9a" stroke="#9a9a9a" stroke-width="0.5"/><path d="M314.2 282.6L320.1 282.6L322.2 289.4L315.3 289.4z" fill="#949494" stroke="#949494" stroke-width="0.5"/><path d="M320.1 282.6L325.6 282.6L328.6 289.4L322.2 289.4z" fill="#8c8c8c" stroke="#8c8c8c" stroke-width="0.5"/><path d="M325.6 282.6L330.4 282.6L334.3 289.4L328.6 289.4z" fill="#838383" stroke="#838383" stroke-width="0.5"/><path d="M330.4 282.6L334.3 282.6L338.9 289.4L334.3 289.4z" fill="#7a7a7a" stroke="#7a7a7a" stroke-width="0.5"/><path d="M334.3 282.6L337.2 282.6L342.3 289.4L338.9 289.4z" fill="#707070" stroke="#707070" stroke-width="0.5"/><path d="M337.2 282.6L339.0 282.6L344.5 289.4L342.3 289.4z" fill="#656565" stroke="#656565" stroke-width="0.5"/><path d="M339.0 282.6L339.6 282.6L345.2 289.4L344.5 289.4z" fill="#5b5b5b" stroke="#5b5b5b" stroke-width="0.5"/><path d="M270.8 289.4L271.5 289.4L267.5 297.2L266.7 297.2z" fill="#838383" stroke="#838383" stroke-width="0.5"/><path d="M271.5 289.4L273.7 289.4L269.8 297.2L267.5 297.2z" fill="#8c8c8c" stroke="#8c8c8c" stroke-width="0.5"/><path d="M273.7 289.4L277.1 289.4L273.7 297.2L269.8 297.2z" fill="#949494" stroke="#949494" stroke-width="0.5"/><path d="M277.1 289.4L281.7 289.4L278.8 297.2L273.7 297.2z" fill="#9a9a9a" stroke="#9a9a9a" stroke-width="0.5"/><path d="M281.7 289.4L287.4 289.4L285.1 297.2L278.8 297.2z" fill="#9f9f9f" stroke="#9f9f9f" stroke-width="0.5"/><path d="M287.4 289.4L293.8 289.4L292.2 297.2L285.1 297.2z" fill="#a1a1a1" stroke="#a1a1a1" stroke-width="0.5"/><path d="M293.8 289.4L300.7 289.4L299.9 297.2L292.2 297.2z" fill="#a0a0a0" stroke="#a0a0a0" stroke-width="0.5"/><path d="M300.7 289.4L308.0 289.4L308.0 297.2L299.9 297.2z" fill="#9e9e9e" stroke="#9e9e9e" stroke-width="0.5"/><path d="M308.0 289.4L315.3 289.4L316.1 297.2L308.0 297.2z" fill="#999999" stroke="#999999" stroke-width="0.5"/><path d="M315.3 289.4L322.2 289.4L323.8 297.2L316.1 297.2z" fill="#929292" stroke="#929292" stroke-width="0.5"/><path d="M322.2 289.4L328.6 289.4L330.9 297.2L323.8 297.2z" fill="#898989" stroke="#898989" stroke-width="0.5"/><path d="M328.6 289.4L334.3 289.4L337.2 297.2L330.9 297.2z" fill="#7f7f7f" stroke="#7f7f7f" stroke-width="0.5"/><path d="M334.3 289.4L338.9 289.4L342.3 297.2L337.2 297.2z" fill="#747474" stroke="#747474" stroke-width="0.5"/><path d="M338.9 289.4L342.3 289.4L346.2 297.2L342.3 297.2z" fill="#696969" stroke="#696969" stroke-width="0.5"/><path d="M342.3 289.4L344.5 289.4L348.5 297.2L346.2 297.2z" fill="#5d5d5d" stroke="#5d5d5d" stroke-width="0.5"/><path d="M344.5 289.4L345.2 289.4L349.3 297.2L348.5 297.2z" fill="#515151" stroke="#515151" stroke-width="0.5"/><path d="M266.7 297.2L267.5 297.2L265.0 305.7L264.2 305.7z" fill="#7d7d7d" stroke="#7d7d7d" stroke-width="0.5"/><path d="M267.5 297.2L269.8 297.2L267.5 305.7L265.0 305.7z" fill="#878787" stroke="#878787" stroke-width="0.5"/><path d="M269.8 297.2L273.7 297.2L271.5 305.7L267.5 305.7z" fill="#909090" stroke="#909090" stroke-width="0.5"/><path d="M273.7 297.2L278.8 297.2L277.0 305.7L271.5 305.7z" fill="#979797" stroke="#979797" stroke-width="0.5"/><path d="M278.8 297.2L285.1 297.2L283.6 305.7L277.0 305.7z" fill="#9b9b9b" stroke="#9b9b9b" stroke-width="0.5"/><path d="M285.1 297.2L292.2 297.2L291.2 305.7L283.6 305.7z" fill="#9e9e9e" stroke="#9e9e9e" stroke-width="0.5"/><path d="M292.2 297.2L299.9 297.2L299.4 305.7L291.2 305.7z" fill="#9d9d9d" stroke="#9d9d9d" stroke-width="0.5"/><path d="M299.9 297.2L308.0 297.2L308.0 305.7L299.4 305.7z" fill="#9a9a9a" stroke="#9a9a9a" stroke-width="0.5"/><path d="M308.0 297.2L316.1 297.2L316.6 305.7L308.0 305.7z" fill="#959595" stroke="#959595" stroke-width="0.5"/><path d="M316.1 297.2L323.8 297.2L324.8 305.7L316.6 305.7z" fill="#8e8e8e" stroke="#8e8e8e" stroke-width="0.5"/><path d="M323.8 297.2L330.9 297.2L332.4 305.7L324.8 305.7z" fill="#848484" stroke="#848484" stroke-width="0.5"/><path d="M330.9 297.2L337.2 297.2L339.0 305.7L332.4 305.7z" fill="#797979" stroke="#797979" stroke-width="0.5"/><path d="M337.2 297.2L342.3 297.2L344.5 305.7L339.0 305.7z" fill="#6d6d6d" stroke="#6d6d6d" stroke-width="0.5"/><path d="M342.3 297.2L346.2 297.2L348.5 305.7L344.5 305.7z" fill="#616161" stroke="#616161" stroke-width="0.5"/><path d="M346.2 297.2L348.5 297.2L351.0 305.7L348.5 305.7z" fill="#545454" stroke="#545454" stroke-width="0.5"/><path d="M348.5 297.2L349.3 297.2L351.8 305.7L351.0 305.7z" fill="#484848" stroke="#484848" stroke-width="0.5"/><path d="M264.2 305.7L265.0 305.7L264.2 314.5L263.3 314.5z" fill="#767676" stroke="#767676" stroke-width="0.5"/><path d="M265.0 305.7L267.5 305.7L266.7 314.5L264.2 314.5z" fill="#808080" stroke="#808080" stroke-width="0.5"/><path d="M267.5 305.7L271.5 305.7L270.8 314.5L266.7 314.5z" fill="#8a8a8a" stroke="#8a8a8a" stroke-width="0.5"/><path d="M271.5 305.7L277.0 305.7L276.4 314.5L270.8 314.5z" fill="#919191" stroke="#919191" stroke-width="0.5"/><path d="M277.0 305.7L283.6 305.7L283.2 314.5L276.4 314.5z" fill="#959595" stroke="#959595" stroke-width="0.5"/><path d="M283.6 305.7L291.2 305.7L290.9 314.5L283.2 314.5z" fill="#979797" stroke="#979797" stroke-width="0.5"/><path d="M291.2 305.7L299.4 305.7L299.3 314.5L290.9 314.5z" fill="#979797" stroke="#979797" stroke-width="0.5"/><path d="M299.4 305.7L308.0 305.7L308.0 314.5L299.3 314.5z" fill="#949494" stroke="#949494" stroke-width="0.5"/><path d="M308.0 305.7L316.6 305.7L316.7 314.5L308.0 314.5z" fill="#8f8f8f" stroke="#8f8f8f" stroke-width="0.5"/><path d="M316.6 305.7L324.8 305.7L325.1 314.5L316.7 314.5z" fill="#878787" stroke="#878787" stroke-width="0.5"/><path d="M324.8 305.7L332.4 305.7L332.8 314.5L325.1 314.5z" fill="#7d7d7d" stroke="#7d7d7d" stroke-width="0.5"/><path d="M332.4 305.7L339.0 305.7L339.6 314.5L332.8 314.5z" fill="#727272" stroke="#727272" stroke-width="0.5"/><path d="M339.0 305.7L344.5 305.7L345.2 314.5L339.6 314.5z" fill="#666666" stroke="#666666" stroke-width="0.5"/><path d="M344.5 305.7L348.5 305.7L349.3 314.5L345.2 314.5z" fill="#585858" stroke="#585858" stroke-width="0.5"/><path d="M348.5 305.7L351.0 305.7L351.8 314.5L349.3 314.5z" fill="#4b4b4b" stroke="#4b4b4b" stroke-width="0.5"/><path d="M351.0 305.7L351.8 305.7L352.7 314.5L351.8 314.5z" fill="#3e3e3e" stroke="#3e3e3e" stroke-width="0.5"/><path d="M263.3 314.5L264.2 314.5L265.0 323.3L264.2 323.3z" fill="#6d6d6d" stroke="#6d6d6d" stroke-width="0.5"/><path d="M264.2 314.5L266.7 314.5L267.5 323.3L265.0 323.3z" fill="#787878" stroke="#787878" stroke-width="0.5"/><path d="M266.7 314.5L270.8 314.5L271.5 323.3L267.5 323.3z" fill="#818181" stroke="#818181" stroke-width="0.5"/><path d="M270.8 314.5L276.4 314.5L277.0 323.3L271.5 323.3z" fill="#888888" stroke="#888888" stroke-width="0.5"/><path d="M276.4 314.5L283.2 314.5L283.6 323.3L277.0 323.3z" fill="#8c8c8c" stroke="#8c8c8c" stroke-width="0.5"/><path d="M283.2 314.5L290.9 314.5L291.2 323.3L283.6 323.3z" fill="#8f8f8f" stroke="#8f8f8f" stroke-width="0.5"/><path d="M290.9 314.5L299.3 314.5L299.4 323.3L291.2 323.3z" fill="#8e8e8e" stroke="#8e8e8e" stroke-width="0.5"/><path d="M299.3 314.5L308.0 314.5L308.0 323.3L299.4 323.3z" fill="#8b8b8b" stroke="#8b8b8b" stroke-width="0.5"/><path d="M308.0 314.5L316.7 314.5L316.6 323.3L308.0 323.3z" fill="#868686" stroke="#868686" stroke-width="0.5"/><path d="M316.7 314.5L325.1 314.5L324.8 323.3L316.6 323.3z" fill="#7e7e7e" stroke="#7e7e7e" stroke-width="0.5"/><path d="M325.1 314.5L332.8 314.5L332.4 323.3L324.8 323.3z" fill="#747474" stroke="#747474" stroke-width="0.5"/><path d="M332.8 314.5L339.6 314.5L339.0 323.3L332.4 323.3z" fill="#696969" stroke="#696969" stroke-width="0.5"/><path d="M339.6 314.5L345.2 314.5L344.5 323.3L339.0 323.3z" fill="#5d5d5d" stroke="#5d5d5d" stroke-width="0.5"/><path d="M345.2 314.5L349.3 314.5L348.5 323.3L344.5 323.3z" fill="#505050" stroke="#505050" stroke-width="0.5"/><path d="M349.3 314.5L351.8 314.5L351.0 323.3L348.5 323.3z" fill="#424242" stroke="#424242" stroke-width="0.5"/><path d="M351.8 314.5L352.7 314.5L351.8 323.3L351.0 323.3z" fill="#353535" stroke="#353535" stroke-width="0.5"/><path d="M264.2 323.3L265.0 323.3L267.5 331.8L266.7 331.8z" fill="#636363" stroke="#636363" stroke-width="0.5"/><path d="M265.0 323.3L267.5 323.3L269.8 331.8L267.5 331.8z" fill="#6d6d6d" stroke="#6d6d6d" stroke-width="0.5"/><path d="M267.5 323.3L271.5 323.3L273.7 331.8L269.8 331.8z" fill="#767676" stroke="#767676" stroke-width="0.5"/><path d="M271.5 323.3L277.0 323.3L278.8 331.8L273.7 331.8z" fill="#7d7d7d" stroke="#7d7d7d" stroke-width="0.5"/><path d="M277.0 323.3L283.6 323.3L285.1 331.8L278.8 331.8z" fill="#818181" stroke="#818181" stroke-width="0.5"/><path d="M283.6 323.3L291.2 323.3L292.2 331.8L285.1 331.8z" fill="#838383" stroke="#838383" stroke-width="0.5"/><path d="M291.2 323.3L299.4 323.3L299.9 331.8L292.2 331.8z" fill="#838383" stroke="#838383" stroke-width="0.5"/><path d="M299.4 323.3L308.0 323.3L308.0 331.8L299.9 331.8z" fill="#808080" stroke="#808080" stroke-width="0.5"/><path d="M308.0 323.3L316.6 323.3L316.1 331.8L308.0 331.8z" fill="#7b7b7b" stroke="#7b7b7b" stroke-width="0.5"/><path d="M316.6 323.3L324.8 323.3L323.8 331.8L316.1 331.8z" fill="#737373" stroke="#737373" stroke-width="0.5"/><path d="M324.8 323.3L332.4 323.3L330.9 331.8L323.8 331.8z" fill="#6a6a6a" stroke="#6a6a6a" stroke-width="0.5"/><path d="M332.4 323.3L339.0 323.3L337.2 331.8L330.9 331.8z" fill="#5f5f5f" stroke="#5f5f5f" stroke-width="0.5"/><path d="M339.0 323.3L344.5 323.3L342.3 331.8L337.2 331.8z" fill="#535353" stroke="#535353" stroke-width="0.5"/><path d="M344.5 323.3L348.5 323.3L346.2 331.8L342.3 331.8z" fill="#474747" stroke="#474747" stroke-width="0.5"/><path d="M348.5 323.3L351.0 323.3L348.5 331.8L346.2 331.8z" fill="#3a3a3a" stroke="#3a3a3a" stroke-width="0.5"/><path d="M351.0 323.3L351.8 323.3L349.3 331.8L348.5 331.8z" fill="#323232" stroke="#323232" stroke-width="0.5"/><path d="M266.7 331.8L267.5 331.8L271.5 339.6L270.8 339.6z" fill="#585858" stroke="#585858" stroke-width="0.5"/><path d="M267.5 331.8L269.8 331.8L273.7 339.6L271.5 339.6z" fill="#626262" stroke="#626262" stroke-width="0.5"/><path d="M269.8 331.8L273.7 331.8L277.1 339.6L273.7 339.6z" fill="#6a6a6a" stroke="#6a6a6a" stroke-width="0.5"/><path d="M273.7 331.8L278.8 331.8L281.7 339.6L277.1 339.6z" fill="#707070" stroke="#707070" stroke-width="0.5"/><path d="M278.8 331.8L285.1 331.8L287.4 339.6L281.7 339.6z" fill="#747474" stroke="#747474" stroke-width="0.5"/><path d="M285.1 331.8L292.2 331.8L293.8 339.6L287.4 339.6z" fill="#767676" stroke="#767676" stroke-width="0.5"/><path d="M292.2 331.8L299.9 331.8L300.7 339.6L293.8 339.6z" fill="#767676" stroke="#767676" stroke-width="0.5"/><path d="M299.9 331.8L308.0 331.8L308.0 339.6L300.7 339.6z" fill="#737373" stroke="#737373" stroke-width="0.5"/><path d="M308.0 331.8L316.1 331.8L315.3 339.6L308.0 339.6z" fill="#6e6e6e" stroke="#6e6e6e" stroke-width="0.5"/><path d="M316.1 331.8L323.8 331.8L322.2 339.6L315.3 339.6z" fill="#676767" stroke="#676767" stroke-width="0.5"/><path d="M323.8 331.8L330.9 331.8L328.6 339.6L322.2 339.6z" fill="#5f5f5f" stroke="#5f5f5f" stroke-width="0.5"/><path d="M330.9 331.8L337.2 331.8L334.3 339.6L328.6 339.6z" fill="#555555" stroke="#555555" stroke-width="0.5"/><path d="M337.2 331.8L342.3 331.8L338.9 339.6L334.3 339.6z" fill="#4a4a4a" stroke="#4a4a4a" stroke-width="0.5"/><path d="M342.3 331.8L346.2 331.8L342.3 339.6L338.9 339.6z" fill="#3e3e3e" stroke="#3e3e3e" stroke-width="0.5"/><path d="M346.2 331.8L348.5 331.8L344.5 339.6L342.3 339.6z" fill="#333333" stroke="#333333" stroke-width="0.5"/><path d="M348.5 331.8L349.3 331.8L345.2 339.6L344.5 339.6z" fill="#323232" stroke="#323232" stroke-width="0.5"/><path d="M270.8 339.6L271.5 339.6L277.0 346.4L276.4 346.4z" fill="#4d4d4d" stroke="#4d4d4d" stroke-width="0.5"/><path d="M271.5 339.6L273.7 339.6L278.8 346.4L277.0 346.4z" fill="#565656" stroke="#565656" stroke-width="0.5"/><path d="M273.7 339.6L277.1 339.6L281.7 346.4L278.8 346.4z" fill="#5d5d5d" stroke="#5d5d5d" stroke-width="0.5"/><path d="M277.1 339.6L281.7 339.6L285.6 346.4L281.7 346.4z" fill="#626262" stroke="#626262" stroke-width="0.5"/><path d="M281.7 339.6L287.4 339.6L290.4 346.4L285.6 346.4z" fill="#666666" stroke="#666666" stroke-width="0.5"/><path d="M287.4 339.6L293.8 339.6L295.9 346.4L290.4 346.4z" fill="#676767" stroke="#676767" stroke-width="0.5"/><path d="M293.8 339.6L300.7 339.6L301.8 346.4L295.9 346.4z" fill="#676767" stroke="#676767" stroke-width="0.5"/><path d="M300.7 339.6L308.0 339.6L308.0 346.4L301.8 346.4z" fill="#656565" stroke="#656565" stroke-width="0.5"/><path d="M308.0 339.6L315.3 339.6L314.2 346.4L308.0 346.4z" fill="#616161" stroke="#616161" stroke-width="0.5"/><path d="M315.3 339.6L322.2 339.6L320.1 346.4L314.2 346.4z" fill="#5b5b5b" stroke="#5b5b5b" stroke-width="0.5"/><path d="M322.2 339.6L328.6 339.6L325.6 346.4L320.1 346.4z" fill="#535353" stroke="#535353" stroke-width="0.5"/><path d="M328.6 339.6L334.3 339.6L330.4 346.4L325.6 346.4z" fill="#4a4a4a" stroke="#4a4a4a" stroke-width="0.5"/><path d="M334.3 339.6L338.9 339.6L334.3 346.4L330.4 346.4z" fill="#414141" stroke="#414141" stroke-width="0.5"/><path d="M338.9 339.6L342.3 339.6L337.2 346.4L334.3 346.4z" fill="#363636" stroke="#363636" stroke-width="0.5"/><path d="M342.3 339.6L344.5 339.6L339.0 346.4L337.2 346.4z" fill="#323232" stroke="#323232" stroke-width="0.5"/><path d="M344.5 339.6L345.2 339.6L339.6 346.4L339.0 346.4z" fill="#323232" stroke="#323232" stroke-width="0.5"/><path d="M276.4 346.4L277.0 346.4L283.6 352.0L283.2 352.0z" fill="#424242" stroke="#424242" stroke-width="0.5"/><path d="M277.0 346.4L278.8 346.4L285.1 352.0L283.6 352.0z" fill="#494949" stroke="#494949" stroke-width="0.5"/><path d="M278.8 346.4L281.7 346.4L287.4 352.0L285.1 352.0z" fill="#4f4f4f" stroke="#4f4f4f" stroke-width="0.5"/><path d="M281.7 346.4L285.6 346.4L290.4 352.0L287.4 352.0z" fill="#535353" stroke="#535353" stroke-width="0.5"/><path d="M285.6 346.4L290.4 346.4L294.2 352.0L290.4 352.0z" fill="#565656" stroke="#565656" stroke-width="0.5"/><path d="M290.4 346.4L295.9 346.4L298.5 352.0L294.2 352.0z" fill="#585858" stroke="#585858" stroke-width="0.5"/><path d="M295.9 346.4L301.8 346.4L303.2 352.0L298.5 352.0z" fill="#585858" stroke="#585858" stroke-width="0.5"/><path d="M301.8 346.4L308.0 346.4L308.0 352.0L303.2 352.0z" fill="#565656" stroke="#565656" stroke-width="0.5"/><path d="M308.0 346.4L314.2 346.4L312.8 352.0L308.0 352.0z" fill="#525252" stroke="#525252" stroke-width="0.5"/><path d="M314.2 346.4L320.1 346.4L317.5 352.0L312.8 352.0z" fill="#4d4d4d" stroke="#4d4d4d" stroke-width="0.5"/><path d="M320.1 346.4L325.6 346.4L321.8 352.0L317.5 352.0z" fill="#474747" stroke="#474747" stroke-width="0.5"/><path d="M325.6 346.4L330.4 346.4L325.6 352.0L321.8 352.0z" fill="#404040" stroke="#404040" stroke-width="0.5"/><path d="M330.4 346.4L334.3 346.4L328.6 352.0L325.6 352.0z" fill="#383838" stroke="#383838" stroke-width="0.5"/><path d="M334.3 346.4L337.2 346.4L330.9 352.0L328.6 352.0z" fill="#323232" stroke="#323232" stroke-width="0.5"/><path d="M337.2 346.4L339.0 346.4L332.4 352.0L330.9 352.0z" fill="#323232" stroke="#323232" stroke-width="0.5"/><path d="M339.0 346.4L339.6 346.4L332.8 352.0L332.4 352.0z" fill="#323232" stroke="#323232" stroke-width="0.5"/><path d="M283.2 352.0L283.6 352.0L291.2 356.2L290.9 356.2z" fill="#383838" stroke="#383838" stroke-width="0.5"/><path d="M283.6 352.0L285.1 352.0L292.2 356.2L291.2 356.2z" fill="#3d3d3d" stroke="#3d3d3d" stroke-width="0.5"/><path d="M285.1 352.0L287.4 352.0L293.8 356.2L292.2 356.2z" fill="#414141" stroke="#414141" stroke-width="0.5"/><path d="M287.4 352.0L290.4 352.0L295.9 356.2L293.8 356.2z" fill="#454545" stroke="#454545" stroke-width="0.5"/><path d="M290.4 352.0L294.2 352.0L298.5 356.2L295.9 356.2z" fill="#474747" stroke="#474747" stroke-width="0.5"/><path d="M294.2 352.0L298.5 352.0L301.5 356.2L298.5 356.2z" fill="#484848" stroke="#484848" stroke-width="0.5"/><path d="M298.5 352.0L303.2 352.0L304.7 356.2L301.5 356.2z" fill="#484848" stroke="#484848" stroke-width="0.5"/><path d="M303.2 352.0L308.0 352.0L308.0 356.2L304.7 356.2z" fill="#464646" stroke="#464646" stroke-width="0.5"/><path d="M308.0 352.0L312.8 352.0L311.3 356.2L308.0 356.2z" fill="#444444" stroke="#444444" stroke-width="0.5"/><path d="M312.8 352.0L317.5 352.0L314.5 356.2L311.3 356.2z" fill="#404040" stroke="#404040" stroke-width="0.5"/><path d="M317.5 352.0L321.8 352.0L317.5 356.2L314.5 356.2z" fill="#3b3b3b" stroke="#3b3b3b" stroke-width="0.5"/><path d="M321.8 352.0L325.6 352.0L320.1 356.2L317.5 356.2z" fill="#363636" stroke="#363636" stroke-width="0.5"/><path d="M325.6 352.0L328.6 352.0L322.2 356.2L320.1 356.2z" fill="#323232" stroke="#323232" stroke-width="0.5"/><path d="M328.6 352.0L330.9 352.0L323.8 356.2L322.2 356.2z" fill="#323232" stroke="#323232" stroke-width="0.5"/><path d="M330.9 352.0L332.4 352.0L324.8 356.2L323.8 356.2z" fill="#323232" stroke="#323232" stroke-width="0.5"/><path d="M332.4 352.0L332.8 352.0L325.1 356.2L324.8 356.2z" fill="#323232" stroke="#323232" stroke-width="0.5"/><path d="M290.9 356.2L291.2 356.2L299.4 358.7L299.3 358.7z" fill="#323232" stroke="#323232" stroke-width="0.5"/><path d="M291.2 356.2L292.2 356.2L299.9 358.7L299.4 358.7z" fill="#323232" stroke="#323232" stroke-width="0.5"/><path d="M292.2 356.2L293.8 356.2L300.7 358.7L299.9 358.7z" fill="#343434" stroke="#343434" stroke-width="0.5"/><path d="M293.8 356.2L295.9 356.2L301.8 358.7L300.7 358.7z" fill="#363636" stroke="#363636" stroke-width="0.5"/><path d="M295.9 356.2L298.5 356.2L303.2 358.7L301.8 358.7z" fill="#383838" stroke="#383838" stroke-width="0.5"/><path d="M298.5 356.2L301.5 356.2L304.7 358.7L303.2 358.7z" fill="#383838" stroke="#383838" stroke-width="0.5"/><path d="M301.5 356.2L304.7 356.2L306.3 358.7L304.7 358.7z" fill="#383838" stroke="#383838" stroke-width="0.5"/><path d="M304.7 356.2L308.0 356.2L308.0 358.7L306.3 358.7z" fill="#373737" stroke="#373737" stroke-width="0.5"/><path d="M308.0 356.2L311.3 356.2L309.7 358.7L308.0 358.7z" fill="#363636" stroke="#363636" stroke-width="0.5"/><path d="M311.3 356.2L314.5 356.2L311.3 358.7L309.7 358.7z" fill="#333333" stroke="#333333" stroke-width="0.5"/><path d="M314.5 356.2L317.5 356.2L312.8 358.7L311.3 358.7z" fill="#323232" stroke="#323232" stroke-width="0.5"/><path d="M317.5 356.2L320.1 356.2L314.2 358.7L312.8 358.7z" fill="#323232" stroke="#323232" stroke-width="0.5"/><path d="M320.1 356.2L322.2 356.2L315.3 358.7L314.2 358.7z" fill="#323232" stroke="#323232" stroke-width="0.5"/><path d="M322.2 356.2L323.8 356.2L316.1 358.7L315.3 358.7z" fill="#323232" stroke="#323232" stroke-width="0.5"/><path d="M323.8 356.2L324.8 356.2L316.6 358.7L316.1 358.7z" fill="#323232" stroke="#323232" stroke-width="0.5"/><path d="M324.8 356.2L325.1 356.2L316.7 358.7L316.6 358.7z" fill="#323232" stroke="#323232" stroke-width="0.5"/><path d="M299.3 358.7L299.4 358.7L308.0 359.6L308.0 359.6z" fill="#323232" stroke="#323232" stroke-width="0.5"/><path d="M299.4 358.7L299.9 358.7L308.0 359.6L308.0 359.6z" fill="#323232" stroke="#323232" stroke-width="0.5"/><path d="M299.9 358.7L300.7 358.7L308.0 359.6L308.0 359.6z" fill="#323232" stroke="#323232" stroke-width="0.5"/><path d="M300.7 358.7L301.8 358.7L308.0 359.6L308.0 359.6z" fill="#323232" stroke="#323232" stroke-width="0.5"/><path d="M301.8 358.7L303.2 358.7L308.0 359.6L308.0 359.6z" fill="#323232" stroke="#323232" stroke-width="0.5"/><path d="M303.2 358.7L304.7 358.7L308.0 359.6L308.0 359.6z" fill="#323232" stroke="#323232" stroke-width="0.5"/><path d="M304.7 358.7L306.3 358.7L308.0 359.6L308.0 359.6z" fill="#323232" stroke="#323232" stroke-width="0.5"/><path d="M306.3 358.7L308.0 358.7L308.0 359.6L308.0 359.6z" fill="#323232" stroke="#323232" stroke-width="0.5"/><path d="M308.0 358.7L309.7 358.7L308.0 359.6L308.0 359.6z" fill="#323232" stroke="#323232" stroke-width="0.5"/><path d="M309.7 358.7L311.3 358.7L308.0 359.6L308.0 359.6z" fill="#323232" stroke="#323232" stroke-width="0.5"/><path d="M311.3 358.7L312.8 358.7L308.0 359.6L308.0 359.6z" fill="#323232" stroke="#323232" stroke-width="0.5"/><path d="M312.8 358.7L314.2 358.7L308.0 359.6L308.0 359.6z" fill="#323232" stroke="#323232" stroke-width="0.5"/><path d="M314.2 358.7L315.3 358.7L308.0 359.6L308.0 359.6z" fill="#323232" stroke="#323232" stroke-width="0.5"/><path d="M315.3 358.7L316.1 358.7L308.0 359.6L308.0 359.6z" fill="#323232" stroke="#323232" stroke-width="0.5"/><path d="M316.1 358.7L316.6 358.7L308.0 359.6L308.0 359.6z" fill="#323232" stroke="#323232" stroke-width="0.5"/><path d="M316.6 358.7L316.7 358.7L308.0 359.6L308.0 359.6z" fill="#323232" stroke="#323232" stroke-width="0.5"/></g>
<ellipse cx="308.0" cy="314.5" rx="44.7" ry="45.1" fill="none" stroke="#ea8c2c" stroke-width="1.1"/>
<path d="M295.0 314.5H321.0M308.0 301.5V327.5" stroke="#4a4a4a" stroke-width="0.55"/>
<circle cx="308.0" cy="314.5" r="6" stroke="#f0f0f0" stroke-width="0.9" stroke-dasharray="2 1.2" fill="none"/>
<circle cx="308.0" cy="314.5" r="6" stroke="#d03030" stroke-width="0.9" stroke-dasharray="1.2 8.2" fill="none"/>
<circle cx="308.0" cy="314.5" r="1.5" fill="#ff8c1a"/></svg>
<svg class="a" style="left:0;top:0" width="1027" height="640" viewBox="0 0 1027 640"><defs><clipPath id="cpR"><ellipse cx="828.1" cy="314.2" rx="46.3" ry="46.5"/></clipPath></defs>
<g clip-path="url(#cpR)" shape-rendering="crispEdges"><path d="M828.1 267.7L828.1 267.7L819.2 268.6L819.1 268.6z" fill="#808080" stroke="#808080" stroke-width="0.5"/><path d="M828.1 267.7L828.1 267.7L819.8 268.6L819.2 268.6z" fill="#818181" stroke="#818181" stroke-width="0.5"/><path d="M828.1 267.7L828.1 267.7L820.6 268.6L819.8 268.6z" fill="#828282" stroke="#828282" stroke-width="0.5"/><path d="M828.1 267.7L828.1 267.7L821.7 268.6L820.6 268.6z" fill="#828282" stroke="#828282" stroke-width="0.5"/><path d="M828.1 267.7L828.1 267.7L823.1 268.6L821.7 268.6z" fill="#838383" stroke="#838383" stroke-width="0.5"/><path d="M828.1 267.7L828.1 267.7L824.6 268.6L823.1 268.6z" fill="#838383" stroke="#838383" stroke-width="0.5"/><path d="M828.1 267.7L828.1 267.7L826.3 268.6L824.6 268.6z" fill="#838383" stroke="#838383" stroke-width="0.5"/><path d="M828.1 267.7L828.1 267.7L828.1 268.6L826.3 268.6z" fill="#838383" stroke="#838383" stroke-width="0.5"/><path d="M828.1 267.7L828.1 267.7L829.9 268.6L828.1 268.6z" fill="#828282" stroke="#828282" stroke-width="0.5"/><path d="M828.1 267.7L828.1 267.7L831.6 268.6L829.9 268.6z" fill="#818181" stroke="#818181" stroke-width="0.5"/><path d="M828.1 267.7L828.1 267.7L833.1 268.6L831.6 268.6z" fill="#808080" stroke="#808080" stroke-width="0.5"/><path d="M828.1 267.7L828.1 267.7L834.5 268.6L833.1 268.6z" fill="#7f7f7f" stroke="#7f7f7f" stroke-width="0.5"/><path d="M828.1 267.7L828.1 267.7L835.6 268.6L834.5 268.6z" fill="#7e7e7e" stroke="#7e7e7e" stroke-width="0.5"/><path d="M828.1 267.7L828.1 267.7L836.4 268.6L835.6 268.6z" fill="#7d7d7d" stroke="#7d7d7d" stroke-width="0.5"/><path d="M828.1 267.7L828.1 267.7L837.0 268.6L836.4 268.6z" fill="#7b7b7b" stroke="#7b7b7b" stroke-width="0.5"/><path d="M828.1 267.7L828.1 267.7L837.1 268.6L837.0 268.6z" fill="#7a7a7a" stroke="#7a7a7a" stroke-width="0.5"/><path d="M819.1 268.6L819.2 268.6L810.7 271.2L810.4 271.2z" fill="#848484" stroke="#848484" stroke-width="0.5"/><path d="M819.2 268.6L819.8 268.6L811.7 271.2L810.7 271.2z" fill="#888888" stroke="#888888" stroke-width="0.5"/><path d="M819.8 268.6L820.6 268.6L813.4 271.2L811.7 271.2z" fill="#8a8a8a" stroke="#8a8a8a" stroke-width="0.5"/><path d="M820.6 268.6L821.7 268.6L815.6 271.2L813.4 271.2z" fill="#8c8c8c" stroke="#8c8c8c" stroke-width="0.5"/><path d="M821.7 268.6L823.1 268.6L818.3 271.2L815.6 271.2z" fill="#8e8e8e" stroke="#8e8e8e" stroke-width="0.5"/><path d="M823.1 268.6L824.6 268.6L821.3 271.2L818.3 271.2z" fill="#8e8e8e" stroke="#8e8e8e" stroke-width="0.5"/><path d="M824.6 268.6L826.3 268.6L824.6 271.2L821.3 271.2z" fill="#8e8e8e" stroke="#8e8e8e" stroke-width="0.5"/><path d="M826.3 268.6L828.1 268.6L828.1 271.2L824.6 271.2z" fill="#8d8d8d" stroke="#8d8d8d" stroke-width="0.5"/><path d="M828.1 268.6L829.9 268.6L831.6 271.2L828.1 271.2z" fill="#8c8c8c" stroke="#8c8c8c" stroke-width="0.5"/><path d="M829.9 268.6L831.6 268.6L834.9 271.2L831.6 271.2z" fill="#898989" stroke="#898989" stroke-width="0.5"/><path d="M831.6 268.6L833.1 268.6L837.9 271.2L834.9 271.2z" fill="#878787" stroke="#878787" stroke-width="0.5"/><path d="M833.1 268.6L834.5 268.6L840.6 271.2L837.9 271.2z" fill="#838383" stroke="#838383" stroke-width="0.5"/><path d="M834.5 268.6L835.6 268.6L842.8 271.2L840.6 271.2z" fill="#808080" stroke="#808080" stroke-width="0.5"/><path d="M835.6 268.6L836.4 268.6L844.5 271.2L842.8 271.2z" fill="#7c7c7c" stroke="#7c7c7c" stroke-width="0.5"/><path d="M836.4 268.6L837.0 268.6L845.5 271.2L844.5 271.2z" fill="#787878" stroke="#787878" stroke-width="0.5"/><path d="M837.0 268.6L837.1 268.6L845.8 271.2L845.5 271.2z" fill="#747474" stroke="#747474" stroke-width="0.5"/><path d="M810.4 271.2L810.7 271.2L802.9 275.5L802.4 275.5z" fill="#878787" stroke="#878787" stroke-width="0.5"/><path d="M810.7 271.2L811.7 271.2L804.3 275.5L802.9 275.5z" fill="#8c8c8c" stroke="#8c8c8c" stroke-width="0.5"/><path d="M811.7 271.2L813.4 271.2L806.7 275.5L804.3 275.5z" fill="#919191" stroke="#919191" stroke-width="0.5"/><path d="M813.4 271.2L815.6 271.2L809.9 275.5L806.7 275.5z" fill="#949494" stroke="#949494" stroke-width="0.5"/><path d="M815.6 271.2L818.3 271.2L813.8 275.5L809.9 275.5z" fill="#969696" stroke="#969696" stroke-width="0.5"/><path d="M818.3 271.2L821.3 271.2L818.3 275.5L813.8 275.5z" fill="#979797" stroke="#979797" stroke-width="0.5"/><path d="M821.3 271.2L824.6 271.2L823.1 275.5L818.3 275.5z" fill="#979797" stroke="#979797" stroke-width="0.5"/><path d="M824.6 271.2L828.1 271.2L828.1 275.5L823.1 275.5z" fill="#969696" stroke="#969696" stroke-width="0.5"/><path d="M828.1 271.2L831.6 271.2L833.1 275.5L828.1 275.5z" fill="#939393" stroke="#939393" stroke-width="0.5"/><path d="M831.6 271.2L834.9 271.2L837.9 275.5L833.1 275.5z" fill="#8f8f8f" stroke="#8f8f8f" stroke-width="0.5"/><path d="M834.9 271.2L837.9 271.2L842.4 275.5L837.9 275.5z" fill="#8b8b8b" stroke="#8b8b8b" stroke-width="0.5"/><path d="M837.9 271.2L840.6 271.2L846.3 275.5L842.4 275.5z" fill="#858585" stroke="#858585" stroke-width="0.5"/><path d="M840.6 271.2L842.8 271.2L849.5 275.5L846.3 275.5z" fill="#808080" stroke="#808080" stroke-width="0.5"/><path d="M842.8 271.2L844.5 271.2L851.9 275.5L849.5 275.5z" fill="#797979" stroke="#797979" stroke-width="0.5"/><path d="M844.5 271.2L845.5 271.2L853.3 275.5L851.9 275.5z" fill="#737373" stroke="#737373" stroke-width="0.5"/><path d="M845.5 271.2L845.8 271.2L853.8 275.5L853.3 275.5z" fill="#6d6d6d" stroke="#6d6d6d" stroke-width="0.5"/><path d="M802.4 275.5L802.9 275.5L796.0 281.3L795.4 281.3z" fill="#888888" stroke="#888888" stroke-width="0.5"/><path d="M802.9 275.5L804.3 275.5L797.9 281.3L796.0 281.3z" fill="#8f8f8f" stroke="#8f8f8f" stroke-width="0.5"/><path d="M804.3 275.5L806.7 275.5L800.9 281.3L797.9 281.3z" fill="#949494" stroke="#949494" stroke-width="0.5"/><path d="M806.7 275.5L809.9 275.5L805.0 281.3L800.9 281.3z" fill="#999999" stroke="#999999" stroke-width="0.5"/><path d="M809.9 275.5L813.8 275.5L809.9 281.3L805.0 281.3z" fill="#9c9c9c" stroke="#9c9c9c" stroke-width="0.5"/><path d="M813.8 275.5L818.3 275.5L815.6 281.3L809.9 281.3z" fill="#9d9d9d" stroke="#9d9d9d" stroke-width="0.5"/><path d="M818.3 275.5L823.1 275.5L821.7 281.3L815.6 281.3z" fill="#9d9d9d" stroke="#9d9d9d" stroke-width="0.5"/><path d="M823.1 275.5L828.1 275.5L828.1 281.3L821.7 281.3z" fill="#9b9b9b" stroke="#9b9b9b" stroke-width="0.5"/><path d="M828.1 275.5L833.1 275.5L834.5 281.3L828.1 281.3z" fill="#989898" stroke="#989898" stroke-width="0.5"/><path d="M833.1 275.5L837.9 275.5L840.6 281.3L834.5 281.3z" fill="#939393" stroke="#939393" stroke-width="0.5"/><path d="M837.9 275.5L842.4 275.5L846.3 281.3L840.6 281.3z" fill="#8d8d8d" stroke="#8d8d8d" stroke-width="0.5"/><path d="M842.4 275.5L846.3 275.5L851.2 281.3L846.3 281.3z" fill="#858585" stroke="#858585" stroke-width="0.5"/><path d="M846.3 275.5L849.5 275.5L855.3 281.3L851.2 281.3z" fill="#7e7e7e" stroke="#7e7e7e" stroke-width="0.5"/><path d="M849.5 275.5L851.9 275.5L858.3 281.3L855.3 281.3z" fill="#757575" stroke="#757575" stroke-width="0.5"/><path d="M851.9 275.5L853.3 275.5L860.2 281.3L858.3 281.3z" fill="#6d6d6d" stroke="#6d6d6d" stroke-width="0.5"/><path d="M853.3 275.5L853.8 275.5L860.8 281.3L860.2 281.3z" fill="#646464" stroke="#646464" stroke-width="0.5"/><path d="M795.4 281.3L796.0 281.3L790.3 288.4L789.6 288.4z" fill="#868686" stroke="#868686" stroke-width="0.5"/><path d="M796.0 281.3L797.9 281.3L792.5 288.4L790.3 288.4z" fill="#8f8f8f" stroke="#8f8f8f" stroke-width="0.5"/><path d="M797.9 281.3L800.9 281.3L796.1 288.4L792.5 288.4z" fill="#969696" stroke="#969696" stroke-width="0.5"/><path d="M800.9 281.3L805.0 281.3L800.9 288.4L796.1 288.4z" fill="#9b9b9b" stroke="#9b9b9b" stroke-width="0.5"/><path d="M805.0 281.3L809.9 281.3L806.7 288.4L800.9 288.4z" fill="#9f9f9f" stroke="#9f9f9f" stroke-width="0.5"/><path d="M809.9 281.3L815.6 281.3L813.4 288.4L806.7 288.4z" fill="#a1a1a1" stroke="#a1a1a1" stroke-width="0.5"/><path d="M815.6 281.3L821.7 281.3L820.6 288.4L813.4 288.4z" fill="#a0a0a0" stroke="#a0a0a0" stroke-width="0.5"/><path d="M821.7 281.3L828.1 281.3L828.1 288.4L820.6 288.4z" fill="#9e9e9e" stroke="#9e9e9e" stroke-width="0.5"/><path d="M828.1 281.3L834.5 281.3L835.6 288.4L828.1 288.4z" fill="#9a9a9a" stroke="#9a9a9a" stroke-width="0.5"/><path d="M834.5 281.3L840.6 281.3L842.8 288.4L835.6 288.4z" fill="#949494" stroke="#949494" stroke-width="0.5"/><path d="M840.6 281.3L846.3 281.3L849.5 288.4L842.8 288.4z" fill="#8c8c8c" stroke="#8c8c8c" stroke-width="0.5"/><path d="M846.3 281.3L851.2 281.3L855.3 288.4L849.5 288.4z" fill="#838383" stroke="#838383" stroke-width="0.5"/><path d="M851.2 281.3L855.3 281.3L860.1 288.4L855.3 288.4z" fill="#7a7a7a" stroke="#7a7a7a" stroke-width="0.5"/><path d="M855.3 281.3L858.3 281.3L863.7 288.4L860.1 288.4z" fill="#707070" stroke="#707070" stroke-width="0.5"/><path d="M858.3 281.3L860.2 281.3L865.9 288.4L863.7 288.4z" fill="#656565" stroke="#656565" stroke-width="0.5"/><path d="M860.2 281.3L860.8 281.3L866.6 288.4L865.9 288.4z" fill="#5b5b5b" stroke="#5b5b5b" stroke-width="0.5"/><path d="M789.6 288.4L790.3 288.4L786.1 296.4L785.3 296.4z" fill="#838383" stroke="#838383" stroke-width="0.5"/><path d="M790.3 288.4L792.5 288.4L788.6 296.4L786.1 296.4z" fill="#8c8c8c" stroke="#8c8c8c" stroke-width="0.5"/><path d="M792.5 288.4L796.1 288.4L792.5 296.4L788.6 296.4z" fill="#949494" stroke="#949494" stroke-width="0.5"/><path d="M796.1 288.4L800.9 288.4L797.9 296.4L792.5 296.4z" fill="#9a9a9a" stroke="#9a9a9a" stroke-width="0.5"/><path d="M800.9 288.4L806.7 288.4L804.3 296.4L797.9 296.4z" fill="#9f9f9f" stroke="#9f9f9f" stroke-width="0.5"/><path d="M806.7 288.4L813.4 288.4L811.7 296.4L804.3 296.4z" fill="#a1a1a1" stroke="#a1a1a1" stroke-width="0.5"/><path d="M813.4 288.4L820.6 288.4L819.8 296.4L811.7 296.4z" fill="#a0a0a0" stroke="#a0a0a0" stroke-width="0.5"/><path d="M820.6 288.4L828.1 288.4L828.1 296.4L819.8 296.4z" fill="#9e9e9e" stroke="#9e9e9e" stroke-width="0.5"/><path d="M828.1 288.4L835.6 288.4L836.4 296.4L828.1 296.4z" fill="#999999" stroke="#999999" stroke-width="0.5"/><path d="M835.6 288.4L842.8 288.4L844.5 296.4L836.4 296.4z" fill="#929292" stroke="#929292" stroke-width="0.5"/><path d="M842.8 288.4L849.5 288.4L851.9 296.4L844.5 296.4z" fill="#898989" stroke="#898989" stroke-width="0.5"/><path d="M849.5 288.4L855.3 288.4L858.3 296.4L851.9 296.4z" fill="#7f7f7f" stroke="#7f7f7f" stroke-width="0.5"/><path d="M855.3 288.4L860.1 288.4L863.7 296.4L858.3 296.4z" fill="#747474" stroke="#747474" stroke-width="0.5"/><path d="M860.1 288.4L863.7 288.4L867.6 296.4L863.7 296.4z" fill="#696969" stroke="#696969" stroke-width="0.5"/><path d="M863.7 288.4L865.9 288.4L870.1 296.4L867.6 296.4z" fill="#5d5d5d" stroke="#5d5d5d" stroke-width="0.5"/><path d="M865.9 288.4L866.6 288.4L870.9 296.4L870.1 296.4z" fill="#515151" stroke="#515151" stroke-width="0.5"/><path d="M785.3 296.4L786.1 296.4L783.6 305.1L782.7 305.1z" fill="#7d7d7d" stroke="#7d7d7d" stroke-width="0.5"/><path d="M786.1 296.4L788.6 296.4L786.1 305.1L783.6 305.1z" fill="#878787" stroke="#878787" stroke-width="0.5"/><path d="M788.6 296.4L792.5 296.4L790.3 305.1L786.1 305.1z" fill="#909090" stroke="#909090" stroke-width="0.5"/><path d="M792.5 296.4L797.9 296.4L796.0 305.1L790.3 305.1z" fill="#979797" stroke="#979797" stroke-width="0.5"/><path d="M797.9 296.4L804.3 296.4L802.9 305.1L796.0 305.1z" fill="#9b9b9b" stroke="#9b9b9b" stroke-width="0.5"/><path d="M804.3 296.4L811.7 296.4L810.7 305.1L802.9 305.1z" fill="#9e9e9e" stroke="#9e9e9e" stroke-width="0.5"/><path d="M811.7 296.4L819.8 296.4L819.2 305.1L810.7 305.1z" fill="#9d9d9d" stroke="#9d9d9d" stroke-width="0.5"/><path d="M819.8 296.4L828.1 296.4L828.1 305.1L819.2 305.1z" fill="#9a9a9a" stroke="#9a9a9a" stroke-width="0.5"/><path d="M828.1 296.4L836.4 296.4L837.0 305.1L828.1 305.1z" fill="#959595" stroke="#959595" stroke-width="0.5"/><path d="M836.4 296.4L844.5 296.4L845.5 305.1L837.0 305.1z" fill="#8e8e8e" stroke="#8e8e8e" stroke-width="0.5"/><path d="M844.5 296.4L851.9 296.4L853.3 305.1L845.5 305.1z" fill="#848484" stroke="#848484" stroke-width="0.5"/><path d="M851.9 296.4L858.3 296.4L860.2 305.1L853.3 305.1z" fill="#797979" stroke="#797979" stroke-width="0.5"/><path d="M858.3 296.4L863.7 296.4L865.9 305.1L860.2 305.1z" fill="#6d6d6d" stroke="#6d6d6d" stroke-width="0.5"/><path d="M863.7 296.4L867.6 296.4L870.1 305.1L865.9 305.1z" fill="#616161" stroke="#616161" stroke-width="0.5"/><path d="M867.6 296.4L870.1 296.4L872.6 305.1L870.1 305.1z" fill="#545454" stroke="#545454" stroke-width="0.5"/><path d="M870.1 296.4L870.9 296.4L873.5 305.1L872.6 305.1z" fill="#484848" stroke="#484848" stroke-width="0.5"/><path d="M782.7 305.1L783.6 305.1L782.7 314.2L781.8 314.2z" fill="#767676" stroke="#767676" stroke-width="0.5"/><path d="M783.6 305.1L786.1 305.1L785.3 314.2L782.7 314.2z" fill="#808080" stroke="#808080" stroke-width="0.5"/><path d="M786.1 305.1L790.3 305.1L789.6 314.2L785.3 314.2z" fill="#8a8a8a" stroke="#8a8a8a" stroke-width="0.5"/><path d="M790.3 305.1L796.0 305.1L795.4 314.2L789.6 314.2z" fill="#919191" stroke="#919191" stroke-width="0.5"/><path d="M796.0 305.1L802.9 305.1L802.4 314.2L795.4 314.2z" fill="#959595" stroke="#959595" stroke-width="0.5"/><path d="M802.9 305.1L810.7 305.1L810.4 314.2L802.4 314.2z" fill="#979797" stroke="#979797" stroke-width="0.5"/><path d="M810.7 305.1L819.2 305.1L819.1 314.2L810.4 314.2z" fill="#979797" stroke="#979797" stroke-width="0.5"/><path d="M819.2 305.1L828.1 305.1L828.1 314.2L819.1 314.2z" fill="#949494" stroke="#949494" stroke-width="0.5"/><path d="M828.1 305.1L837.0 305.1L837.1 314.2L828.1 314.2z" fill="#8f8f8f" stroke="#8f8f8f" stroke-width="0.5"/><path d="M837.0 305.1L845.5 305.1L845.8 314.2L837.1 314.2z" fill="#878787" stroke="#878787" stroke-width="0.5"/><path d="M845.5 305.1L853.3 305.1L853.8 314.2L845.8 314.2z" fill="#7d7d7d" stroke="#7d7d7d" stroke-width="0.5"/><path d="M853.3 305.1L860.2 305.1L860.8 314.2L853.8 314.2z" fill="#727272" stroke="#727272" stroke-width="0.5"/><path d="M860.2 305.1L865.9 305.1L866.6 314.2L860.8 314.2z" fill="#666666" stroke="#666666" stroke-width="0.5"/><path d="M865.9 305.1L870.1 305.1L870.9 314.2L866.6 314.2z" fill="#585858" stroke="#585858" stroke-width="0.5"/><path d="M870.1 305.1L872.6 305.1L873.5 314.2L870.9 314.2z" fill="#4b4b4b" stroke="#4b4b4b" stroke-width="0.5"/><path d="M872.6 305.1L873.5 305.1L874.4 314.2L873.5 314.2z" fill="#3e3e3e" stroke="#3e3e3e" stroke-width="0.5"/><path d="M781.8 314.2L782.7 314.2L783.6 323.3L782.7 323.3z" fill="#6d6d6d" stroke="#6d6d6d" stroke-width="0.5"/><path d="M782.7 314.2L785.3 314.2L786.1 323.3L783.6 323.3z" fill="#787878" stroke="#787878" stroke-width="0.5"/><path d="M785.3 314.2L789.6 314.2L790.3 323.3L786.1 323.3z" fill="#818181" stroke="#818181" stroke-width="0.5"/><path d="M789.6 314.2L795.4 314.2L796.0 323.3L790.3 323.3z" fill="#888888" stroke="#888888" stroke-width="0.5"/><path d="M795.4 314.2L802.4 314.2L802.9 323.3L796.0 323.3z" fill="#8c8c8c" stroke="#8c8c8c" stroke-width="0.5"/><path d="M802.4 314.2L810.4 314.2L810.7 323.3L802.9 323.3z" fill="#8f8f8f" stroke="#8f8f8f" stroke-width="0.5"/><path d="M810.4 314.2L819.1 314.2L819.2 323.3L810.7 323.3z" fill="#8e8e8e" stroke="#8e8e8e" stroke-width="0.5"/><path d="M819.1 314.2L828.1 314.2L828.1 323.3L819.2 323.3z" fill="#8b8b8b" stroke="#8b8b8b" stroke-width="0.5"/><path d="M828.1 314.2L837.1 314.2L837.0 323.3L828.1 323.3z" fill="#868686" stroke="#868686" stroke-width="0.5"/><path d="M837.1 314.2L845.8 314.2L845.5 323.3L837.0 323.3z" fill="#7e7e7e" stroke="#7e7e7e" stroke-width="0.5"/><path d="M845.8 314.2L853.8 314.2L853.3 323.3L845.5 323.3z" fill="#747474" stroke="#747474" stroke-width="0.5"/><path d="M853.8 314.2L860.8 314.2L860.2 323.3L853.3 323.3z" fill="#696969" stroke="#696969" stroke-width="0.5"/><path d="M860.8 314.2L866.6 314.2L865.9 323.3L860.2 323.3z" fill="#5d5d5d" stroke="#5d5d5d" stroke-width="0.5"/><path d="M866.6 314.2L870.9 314.2L870.1 323.3L865.9 323.3z" fill="#505050" stroke="#505050" stroke-width="0.5"/><path d="M870.9 314.2L873.5 314.2L872.6 323.3L870.1 323.3z" fill="#424242" stroke="#424242" stroke-width="0.5"/><path d="M873.5 314.2L874.4 314.2L873.5 323.3L872.6 323.3z" fill="#353535" stroke="#353535" stroke-width="0.5"/><path d="M782.7 323.3L783.6 323.3L786.1 332.0L785.3 332.0z" fill="#636363" stroke="#636363" stroke-width="0.5"/><path d="M783.6 323.3L786.1 323.3L788.6 332.0L786.1 332.0z" fill="#6d6d6d" stroke="#6d6d6d" stroke-width="0.5"/><path d="M786.1 323.3L790.3 323.3L792.5 332.0L788.6 332.0z" fill="#767676" stroke="#767676" stroke-width="0.5"/><path d="M790.3 323.3L796.0 323.3L797.9 332.0L792.5 332.0z" fill="#7d7d7d" stroke="#7d7d7d" stroke-width="0.5"/><path d="M796.0 323.3L802.9 323.3L804.3 332.0L797.9 332.0z" fill="#818181" stroke="#818181" stroke-width="0.5"/><path d="M802.9 323.3L810.7 323.3L811.7 332.0L804.3 332.0z" fill="#838383" stroke="#838383" stroke-width="0.5"/><path d="M810.7 323.3L819.2 323.3L819.8 332.0L811.7 332.0z" fill="#838383" stroke="#838383" stroke-width="0.5"/><path d="M819.2 323.3L828.1 323.3L828.1 332.0L819.8 332.0z" fill="#808080" stroke="#808080" stroke-width="0.5"/><path d="M828.1 323.3L837.0 323.3L836.4 332.0L828.1 332.0z" fill="#7b7b7b" stroke="#7b7b7b" stroke-width="0.5"/><path d="M837.0 323.3L845.5 323.3L844.5 332.0L836.4 332.0z" fill="#737373" stroke="#737373" stroke-width="0.5"/><path d="M845.5 323.3L853.3 323.3L851.9 332.0L844.5 332.0z" fill="#6a6a6a" stroke="#6a6a6a" stroke-width="0.5"/><path d="M853.3 323.3L860.2 323.3L858.3 332.0L851.9 332.0z" fill="#5f5f5f" stroke="#5f5f5f" stroke-width="0.5"/><path d="M860.2 323.3L865.9 323.3L863.7 332.0L858.3 332.0z" fill="#535353" stroke="#535353" stroke-width="0.5"/><path d="M865.9 323.3L870.1 323.3L867.6 332.0L863.7 332.0z" fill="#474747" stroke="#474747" stroke-width="0.5"/><path d="M870.1 323.3L872.6 323.3L870.1 332.0L867.6 332.0z" fill="#3a3a3a" stroke="#3a3a3a" stroke-width="0.5"/><path d="M872.6 323.3L873.5 323.3L870.9 332.0L870.1 332.0z" fill="#323232" stroke="#323232" stroke-width="0.5"/><path d="M785.3 332.0L786.1 332.0L790.3 340.0L789.6 340.0z" fill="#585858" stroke="#585858" stroke-width="0.5"/><path d="M786.1 332.0L788.6 332.0L792.5 340.0L790.3 340.0z" fill="#626262" stroke="#626262" stroke-width="0.5"/><path d="M788.6 332.0L792.5 332.0L796.1 340.0L792.5 340.0z" fill="#6a6a6a" stroke="#6a6a6a" stroke-width="0.5"/><path d="M792.5 332.0L797.9 332.0L800.9 340.0L796.1 340.0z" fill="#707070" stroke="#707070" stroke-width="0.5"/><path d="M797.9 332.0L804.3 332.0L806.7 340.0L800.9 340.0z" fill="#747474" stroke="#747474" stroke-width="0.5"/><path d="M804.3 332.0L811.7 332.0L813.4 340.0L806.7 340.0z" fill="#767676" stroke="#767676" stroke-width="0.5"/><path d="M811.7 332.0L819.8 332.0L820.6 340.0L813.4 340.0z" fill="#767676" stroke="#767676" stroke-width="0.5"/><path d="M819.8 332.0L828.1 332.0L828.1 340.0L820.6 340.0z" fill="#737373" stroke="#737373" stroke-width="0.5"/><path d="M828.1 332.0L836.4 332.0L835.6 340.0L828.1 340.0z" fill="#6e6e6e" stroke="#6e6e6e" stroke-width="0.5"/><path d="M836.4 332.0L844.5 332.0L842.8 340.0L835.6 340.0z" fill="#676767" stroke="#676767" stroke-width="0.5"/><path d="M844.5 332.0L851.9 332.0L849.5 340.0L842.8 340.0z" fill="#5f5f5f" stroke="#5f5f5f" stroke-width="0.5"/><path d="M851.9 332.0L858.3 332.0L855.3 340.0L849.5 340.0z" fill="#555555" stroke="#555555" stroke-width="0.5"/><path d="M858.3 332.0L863.7 332.0L860.1 340.0L855.3 340.0z" fill="#4a4a4a" stroke="#4a4a4a" stroke-width="0.5"/><path d="M863.7 332.0L867.6 332.0L863.7 340.0L860.1 340.0z" fill="#3e3e3e" stroke="#3e3e3e" stroke-width="0.5"/><path d="M867.6 332.0L870.1 332.0L865.9 340.0L863.7 340.0z" fill="#333333" stroke="#333333" stroke-width="0.5"/><path d="M870.1 332.0L870.9 332.0L866.6 340.0L865.9 340.0z" fill="#323232" stroke="#323232" stroke-width="0.5"/><path d="M789.6 340.0L790.3 340.0L796.0 347.1L795.4 347.1z" fill="#4d4d4d" stroke="#4d4d4d" stroke-width="0.5"/><path d="M790.3 340.0L792.5 340.0L797.9 347.1L796.0 347.1z" fill="#565656" stroke="#565656" stroke-width="0.5"/><path d="M792.5 340.0L796.1 340.0L800.9 347.1L797.9 347.1z" fill="#5d5d5d" stroke="#5d5d5d" stroke-width="0.5"/><path d="M796.1 340.0L800.9 340.0L805.0 347.1L800.9 347.1z" fill="#626262" stroke="#626262" stroke-width="0.5"/><path d="M800.9 340.0L806.7 340.0L809.9 347.1L805.0 347.1z" fill="#666666" stroke="#666666" stroke-width="0.5"/><path d="M806.7 340.0L813.4 340.0L815.6 347.1L809.9 347.1z" fill="#676767" stroke="#676767" stroke-width="0.5"/><path d="M813.4 340.0L820.6 340.0L821.7 347.1L815.6 347.1z" fill="#676767" stroke="#676767" stroke-width="0.5"/><path d="M820.6 340.0L828.1 340.0L828.1 347.1L821.7 347.1z" fill="#656565" stroke="#656565" stroke-width="0.5"/><path d="M828.1 340.0L835.6 340.0L834.5 347.1L828.1 347.1z" fill="#616161" stroke="#616161" stroke-width="0.5"/><path d="M835.6 340.0L842.8 340.0L840.6 347.1L834.5 347.1z" fill="#5b5b5b" stroke="#5b5b5b" stroke-width="0.5"/><path d="M842.8 340.0L849.5 340.0L846.3 347.1L840.6 347.1z" fill="#535353" stroke="#535353" stroke-width="0.5"/><path d="M849.5 340.0L855.3 340.0L851.2 347.1L846.3 347.1z" fill="#4a4a4a" stroke="#4a4a4a" stroke-width="0.5"/><path d="M855.3 340.0L860.1 340.0L855.3 347.1L851.2 347.1z" fill="#414141" stroke="#414141" stroke-width="0.5"/><path d="M860.1 340.0L863.7 340.0L858.3 347.1L855.3 347.1z" fill="#363636" stroke="#363636" stroke-width="0.5"/><path d="M863.7 340.0L865.9 340.0L860.2 347.1L858.3 347.1z" fill="#323232" stroke="#323232" stroke-width="0.5"/><path d="M865.9 340.0L866.6 340.0L860.8 347.1L860.2 347.1z" fill="#323232" stroke="#323232" stroke-width="0.5"/><path d="M795.4 347.1L796.0 347.1L802.9 352.9L802.4 352.9z" fill="#424242" stroke="#424242" stroke-width="0.5"/><path d="M796.0 347.1L797.9 347.1L804.3 352.9L802.9 352.9z" fill="#494949" stroke="#494949" stroke-width="0.5"/><path d="M797.9 347.1L800.9 347.1L806.7 352.9L804.3 352.9z" fill="#4f4f4f" stroke="#4f4f4f" stroke-width="0.5"/><path d="M800.9 347.1L805.0 347.1L809.9 352.9L806.7 352.9z" fill="#535353" stroke="#535353" stroke-width="0.5"/><path d="M805.0 347.1L809.9 347.1L813.8 352.9L809.9 352.9z" fill="#565656" stroke="#565656" stroke-width="0.5"/><path d="M809.9 347.1L815.6 347.1L818.3 352.9L813.8 352.9z" fill="#585858" stroke="#585858" stroke-width="0.5"/><path d="M815.6 347.1L821.7 347.1L823.1 352.9L818.3 352.9z" fill="#585858" stroke="#585858" stroke-width="0.5"/><path d="M821.7 347.1L828.1 347.1L828.1 352.9L823.1 352.9z" fill="#565656" stroke="#565656" stroke-width="0.5"/><path d="M828.1 347.1L834.5 347.1L833.1 352.9L828.1 352.9z" fill="#525252" stroke="#525252" stroke-width="0.5"/><path d="M834.5 347.1L840.6 347.1L837.9 352.9L833.1 352.9z" fill="#4d4d4d" stroke="#4d4d4d" stroke-width="0.5"/><path d="M840.6 347.1L846.3 347.1L842.4 352.9L837.9 352.9z" fill="#474747" stroke="#474747" stroke-width="0.5"/><path d="M846.3 347.1L851.2 347.1L846.3 352.9L842.4 352.9z" fill="#404040" stroke="#404040" stroke-width="0.5"/><path d="M851.2 347.1L855.3 347.1L849.5 352.9L846.3 352.9z" fill="#383838" stroke="#383838" stroke-width="0.5"/><path d="M855.3 347.1L858.3 347.1L851.9 352.9L849.5 352.9z" fill="#323232" stroke="#323232" stroke-width="0.5"/><path d="M858.3 347.1L860.2 347.1L853.3 352.9L851.9 352.9z" fill="#323232" stroke="#323232" stroke-width="0.5"/><path d="M860.2 347.1L860.8 347.1L853.8 352.9L853.3 352.9z" fill="#323232" stroke="#323232" stroke-width="0.5"/><path d="M802.4 352.9L802.9 352.9L810.7 357.2L810.4 357.2z" fill="#383838" stroke="#383838" stroke-width="0.5"/><path d="M802.9 352.9L804.3 352.9L811.7 357.2L810.7 357.2z" fill="#3d3d3d" stroke="#3d3d3d" stroke-width="0.5"/><path d="M804.3 352.9L806.7 352.9L813.4 357.2L811.7 357.2z" fill="#414141" stroke="#414141" stroke-width="0.5"/><path d="M806.7 352.9L809.9 352.9L815.6 357.2L813.4 357.2z" fill="#454545" stroke="#454545" stroke-width="0.5"/><path d="M809.9 352.9L813.8 352.9L818.3 357.2L815.6 357.2z" fill="#474747" stroke="#474747" stroke-width="0.5"/><path d="M813.8 352.9L818.3 352.9L821.3 357.2L818.3 357.2z" fill="#484848" stroke="#484848" stroke-width="0.5"/><path d="M818.3 352.9L823.1 352.9L824.6 357.2L821.3 357.2z" fill="#484848" stroke="#484848" stroke-width="0.5"/><path d="M823.1 352.9L828.1 352.9L828.1 357.2L824.6 357.2z" fill="#464646" stroke="#464646" stroke-width="0.5"/><path d="M828.1 352.9L833.1 352.9L831.6 357.2L828.1 357.2z" fill="#444444" stroke="#444444" stroke-width="0.5"/><path d="M833.1 352.9L837.9 352.9L834.9 357.2L831.6 357.2z" fill="#404040" stroke="#404040" stroke-width="0.5"/><path d="M837.9 352.9L842.4 352.9L837.9 357.2L834.9 357.2z" fill="#3b3b3b" stroke="#3b3b3b" stroke-width="0.5"/><path d="M842.4 352.9L846.3 352.9L840.6 357.2L837.9 357.2z" fill="#363636" stroke="#363636" stroke-width="0.5"/><path d="M846.3 352.9L849.5 352.9L842.8 357.2L840.6 357.2z" fill="#323232" stroke="#323232" stroke-width="0.5"/><path d="M849.5 352.9L851.9 352.9L844.5 357.2L842.8 357.2z" fill="#323232" stroke="#323232" stroke-width="0.5"/><path d="M851.9 352.9L853.3 352.9L845.5 357.2L844.5 357.2z" fill="#323232" stroke="#323232" stroke-width="0.5"/><path d="M853.3 352.9L853.8 352.9L845.8 357.2L845.5 357.2z" fill="#323232" stroke="#323232" stroke-width="0.5"/><path d="M810.4 357.2L810.7 357.2L819.2 359.8L819.1 359.8z" fill="#323232" stroke="#323232" stroke-width="0.5"/><path d="M810.7 357.2L811.7 357.2L819.8 359.8L819.2 359.8z" fill="#323232" stroke="#323232" stroke-width="0.5"/><path d="M811.7 357.2L813.4 357.2L820.6 359.8L819.8 359.8z" fill="#343434" stroke="#343434" stroke-width="0.5"/><path d="M813.4 357.2L815.6 357.2L821.7 359.8L820.6 359.8z" fill="#363636" stroke="#363636" stroke-width="0.5"/><path d="M815.6 357.2L818.3 357.2L823.1 359.8L821.7 359.8z" fill="#383838" stroke="#383838" stroke-width="0.5"/><path d="M818.3 357.2L821.3 357.2L824.6 359.8L823.1 359.8z" fill="#383838" stroke="#383838" stroke-width="0.5"/><path d="M821.3 357.2L824.6 357.2L826.3 359.8L824.6 359.8z" fill="#383838" stroke="#383838" stroke-width="0.5"/><path d="M824.6 357.2L828.1 357.2L828.1 359.8L826.3 359.8z" fill="#373737" stroke="#373737" stroke-width="0.5"/><path d="M828.1 357.2L831.6 357.2L829.9 359.8L828.1 359.8z" fill="#363636" stroke="#363636" stroke-width="0.5"/><path d="M831.6 357.2L834.9 357.2L831.6 359.8L829.9 359.8z" fill="#333333" stroke="#333333" stroke-width="0.5"/><path d="M834.9 357.2L837.9 357.2L833.1 359.8L831.6 359.8z" fill="#323232" stroke="#323232" stroke-width="0.5"/><path d="M837.9 357.2L840.6 357.2L834.5 359.8L833.1 359.8z" fill="#323232" stroke="#323232" stroke-width="0.5"/><path d="M840.6 357.2L842.8 357.2L835.6 359.8L834.5 359.8z" fill="#323232" stroke="#323232" stroke-width="0.5"/><path d="M842.8 357.2L844.5 357.2L836.4 359.8L835.6 359.8z" fill="#323232" stroke="#323232" stroke-width="0.5"/><path d="M844.5 357.2L845.5 357.2L837.0 359.8L836.4 359.8z" fill="#323232" stroke="#323232" stroke-width="0.5"/><path d="M845.5 357.2L845.8 357.2L837.1 359.8L837.0 359.8z" fill="#323232" stroke="#323232" stroke-width="0.5"/><path d="M819.1 359.8L819.2 359.8L828.1 360.7L828.1 360.7z" fill="#323232" stroke="#323232" stroke-width="0.5"/><path d="M819.2 359.8L819.8 359.8L828.1 360.7L828.1 360.7z" fill="#323232" stroke="#323232" stroke-width="0.5"/><path d="M819.8 359.8L820.6 359.8L828.1 360.7L828.1 360.7z" fill="#323232" stroke="#323232" stroke-width="0.5"/><path d="M820.6 359.8L821.7 359.8L828.1 360.7L828.1 360.7z" fill="#323232" stroke="#323232" stroke-width="0.5"/><path d="M821.7 359.8L823.1 359.8L828.1 360.7L828.1 360.7z" fill="#323232" stroke="#323232" stroke-width="0.5"/><path d="M823.1 359.8L824.6 359.8L828.1 360.7L828.1 360.7z" fill="#323232" stroke="#323232" stroke-width="0.5"/><path d="M824.6 359.8L826.3 359.8L828.1 360.7L828.1 360.7z" fill="#323232" stroke="#323232" stroke-width="0.5"/><path d="M826.3 359.8L828.1 359.8L828.1 360.7L828.1 360.7z" fill="#323232" stroke="#323232" stroke-width="0.5"/><path d="M828.1 359.8L829.9 359.8L828.1 360.7L828.1 360.7z" fill="#323232" stroke="#323232" stroke-width="0.5"/><path d="M829.9 359.8L831.6 359.8L828.1 360.7L828.1 360.7z" fill="#323232" stroke="#323232" stroke-width="0.5"/><path d="M831.6 359.8L833.1 359.8L828.1 360.7L828.1 360.7z" fill="#323232" stroke="#323232" stroke-width="0.5"/><path d="M833.1 359.8L834.5 359.8L828.1 360.7L828.1 360.7z" fill="#323232" stroke="#323232" stroke-width="0.5"/><path d="M834.5 359.8L835.6 359.8L828.1 360.7L828.1 360.7z" fill="#323232" stroke="#323232" stroke-width="0.5"/><path d="M835.6 359.8L836.4 359.8L828.1 360.7L828.1 360.7z" fill="#323232" stroke="#323232" stroke-width="0.5"/><path d="M836.4 359.8L837.0 359.8L828.1 360.7L828.1 360.7z" fill="#323232" stroke="#323232" stroke-width="0.5"/><path d="M837.0 359.8L837.1 359.8L828.1 360.7L828.1 360.7z" fill="#323232" stroke="#323232" stroke-width="0.5"/></g>
<ellipse cx="828.1" cy="314.2" rx="46.3" ry="46.5" fill="none" stroke="#ea8c2c" stroke-width="1.1"/>
<path d="M815.1 314.2H841.1M828.1 301.2V327.2" stroke="#4a4a4a" stroke-width="0.55"/>
<circle cx="828.1" cy="314.2" r="6" stroke="#f0f0f0" stroke-width="0.9" stroke-dasharray="2 1.2" fill="none"/>
<circle cx="828.1" cy="314.2" r="6" stroke="#d03030" stroke-width="0.9" stroke-dasharray="1.2 8.2" fill="none"/>
<circle cx="828.1" cy="314.2" r="1.5" fill="#ff8c1a"/></svg>
<div class="t" style="left:42.9px;top:39.36px;font-size:7.9px;line-height:7.9px;color:#f6f6f6;text-shadow:0.5px 0.5px 0 rgba(0,0,0,0.2);-webkit-text-stroke:0.25px #f6f6f6">Front Orthographic</div>
<div class="t" style="left:42.9px;top:51.26px;font-size:7.9px;line-height:7.9px;color:#f6f6f6;text-shadow:0.5px 0.5px 0 rgba(0,0,0,0.2);-webkit-text-stroke:0.25px #f6f6f6">(0) Collection | Sphere</div>
<div class="t" style="left:42.9px;top:62.96px;font-size:7.9px;line-height:7.9px;color:#f6f6f6;text-shadow:0.5px 0.5px 0 rgba(0,0,0,0.2);-webkit-text-stroke:0.25px #f6f6f6">Meters</div>
<div class="t" style="left:641.1999999999999px;top:39.36px;font-size:7.9px;line-height:7.9px;color:#f6f6f6;text-shadow:0.5px 0.5px 0 rgba(0,0,0,0.2);-webkit-text-stroke:0.25px #f6f6f6">Right Orthographic</div>
<div class="t" style="left:641.1999999999999px;top:51.26px;font-size:7.9px;line-height:7.9px;color:#f6f6f6;text-shadow:0.5px 0.5px 0 rgba(0,0,0,0.2);-webkit-text-stroke:0.25px #f6f6f6">(0) Collection | Sphere</div>
<div class="t" style="left:641.1999999999999px;top:62.96px;font-size:7.9px;line-height:7.9px;color:#f6f6f6;text-shadow:0.5px 0.5px 0 rgba(0,0,0,0.2);-webkit-text-stroke:0.25px #f6f6f6">Meters</div>
<div class="a" style="left:4.3px;top:37px;width:26.4px;height:45px;background:#282828;border-radius:3.5px;"></div>
<div class="a" style="left:4.3px;top:37px;width:26.4px;height:22px;background:#4772b3;border-radius:3.5px;border-bottom-left-radius:0;border-bottom-right-radius:0"></div>
<div class="a" style="left:4.3px;top:86.2px;width:26.4px;height:89.8px;background:#282828;border-radius:3.5px;"></div>
<div class="a" style="left:4.3px;top:179.8px;width:26.4px;height:45.0px;background:#282828;border-radius:3.5px;"></div>
<div class="a" style="left:4.3px;top:229.4px;width:26.4px;height:21.599999999999994px;background:#282828;border-radius:3.5px;"></div>
<svg class="a" style="left:4.3px;top:37px;" width="26.4" height="216" viewBox="0 0 26.4 216"><rect x="5.3" y="4.3" width="14.8" height="14.6" stroke="#e8a040" stroke-width="1.1" stroke-dasharray="1.5 1.6" fill="none"/><path d="M10.6 8.2V15L12.2 13.4L13.6 16L14.6 15.4L13.3 12.9H15.8z" fill="#e2e2e2"/><path d="M23.4 21L25.4 19V21z" fill="#cfcfcf"/><circle cx="12.6" cy="33.9" r="7.6" stroke="#e8e8e8" stroke-width="1.2" stroke-dasharray="2.2 1.4" fill="none"/><circle cx="12.6" cy="33.9" r="7.6" stroke="#d03a3a" stroke-width="1.2" stroke-dasharray="1.3 6.2" stroke-dashoffset="-2" fill="none"/><path d="M12.6 28.4V32.4M12.6 35.4V39.4M7.1 33.9H11.1M14.1 33.9H18.1" stroke="#bbb" stroke-width="1"/><path d="M12.4 55.2V57.6M12.4 61.8V64.2M7.9 59.7H10.3M14.5 59.7H16.9" stroke="#e2e2e2" stroke-width="1.3"/><path d="M12.4 52.1L10.4 55.3H14.4z M12.4 67.3L10.4 64.1H14.4z M4.8 59.7L8 57.7V61.7z M20 59.7L16.8 57.7V61.7z" fill="#e2e2e2"/><path d="M6.8 81.2A6.2 6.2 0 0 1 18.2 80.4M18 84.4A6.2 6.2 0 0 1 6.6 85" stroke="#d8d8d8" stroke-width="1.1" fill="none"/><path d="M4.4 81.6H8.8L6.6 84.6z M16 84H20.4L18.2 80.8z" fill="#e2e2e2"/><rect x="10.6" y="80.9" width="3.6" height="3.6" transform="rotate(45 12.4 82.7)" fill="#a8a8a8"/><rect x="6.9" y="99.9" width="11.4" height="10.8" stroke="#a0a0a0" stroke-width="1" fill="none"/><rect x="6.5" y="104.9" width="6.4" height="6.2" fill="#e2e2e2"/><path d="M13.4 104.4L17.4 100.6" stroke="#e2e2e2" stroke-width="1.1"/><circle cx="17" cy="101" r="1.1" fill="#e2e2e2"/><path d="M22 114.5L24 112.5V114.5z" fill="#cfcfcf"/><circle cx="12.4" cy="127.9" r="6.9" stroke="#cfcfcf" stroke-width="1" fill="none"/><rect x="9.5" y="125" width="5.8" height="5.8" fill="#e2e2e2"/><path d="M12.4 120.4L11 122.2H13.8z M12.4 135.4L11 133.6H13.8z M4.9 127.9L6.7 126.5V129.3z M19.9 127.9L18.1 126.5V129.3z" fill="#cfcfcf"/><path d="M5.6 156.2L14.2 147.6L16.4 149.8L7.8 158.4L5 159z" fill="#e2e2e2"/><path d="M7.7 159.2C10 159.5 11.4 156 14 155.2C16.4 154.6 18.4 156.2 20.6 158.4" stroke="#9ab8a8" stroke-width="0.9" fill="none"/><path d="M23 163L25 161V163z" fill="#cfcfcf"/><path d="M10.4 182.2A8.3 8.3 0 0 0 18.7 182.2H10.4V173.9A8.3 8.3 0 0 1 18.7 182.2z" fill="#9cc0a8"/><path d="M10.4 173.9A8.3 8.3 0 0 1 18.7 182.2" stroke="#cfe0c0" stroke-width="0.7" fill="none"/><rect x="6.5" y="169" width="3.9" height="15.9" fill="#e2e2e2"/><rect x="6.5" y="182.2" width="14.4" height="2.7" fill="#e2e2e2"/><path d="M8.5 171H10.4M8.5 173.6H10.4M8.5 176.2H10.4M8.5 178.8H10.4M8.5 181.2H10.4M12.4 182.2V184M15 182.2V184M17.6 182.2V184" stroke="#444" stroke-width="0.6"/><path d="M6.9 200.6L9.9 197.6H20.4V207.2L17.4 210.2H6.9z" stroke="#c8c8c8" stroke-width="0.9" fill="none"/><path d="M6.9 200.6H17.4V210.2M17.4 200.6L20.4 197.6" stroke="#c8c8c8" stroke-width="0.9" fill="none"/><path d="M6 194.4V199M3.7 196.7H8.3" stroke="#c8d8a0" stroke-width="1.2"/><path d="M22.5 212.5L24.5 210.5V212.5z" fill="#cfcfcf"/></svg>
<div class="a" style="left:602.8px;top:37px;width:26.40000000000009px;height:45px;background:#282828;border-radius:3.5px;"></div>
<div class="a" style="left:602.8px;top:37px;width:26.40000000000009px;height:22px;background:#4772b3;border-radius:3.5px;border-bottom-left-radius:0;border-bottom-right-radius:0"></div>
<div class="a" style="left:602.8px;top:86.2px;width:26.40000000000009px;height:89.8px;background:#282828;border-radius:3.5px;"></div>
<div class="a" style="left:602.8px;top:179.8px;width:26.40000000000009px;height:45.0px;background:#282828;border-radius:3.5px;"></div>
<div class="a" style="left:602.8px;top:229.4px;width:26.40000000000009px;height:21.599999999999994px;background:#282828;border-radius:3.5px;"></div>
<svg class="a" style="left:602.8px;top:37px;" width="26.4" height="216" viewBox="0 0 26.4 216"><rect x="5.3" y="4.3" width="14.8" height="14.6" stroke="#e8a040" stroke-width="1.1" stroke-dasharray="1.5 1.6" fill="none"/><path d="M10.6 8.2V15L12.2 13.4L13.6 16L14.6 15.4L13.3 12.9H15.8z" fill="#e2e2e2"/><path d="M23.4 21L25.4 19V21z" fill="#cfcfcf"/><circle cx="12.6" cy="33.9" r="7.6" stroke="#e8e8e8" stroke-width="1.2" stroke-dasharray="2.2 1.4" fill="none"/><circle cx="12.6" cy="33.9" r="7.6" stroke="#d03a3a" stroke-width="1.2" stroke-dasharray="1.3 6.2" stroke-dashoffset="-2" fill="none"/><path d="M12.6 28.4V32.4M12.6 35.4V39.4M7.1 33.9H11.1M14.1 33.9H18.1" stroke="#bbb" stroke-width="1"/><path d="M12.4 55.2V57.6M12.4 61.8V64.2M7.9 59.7H10.3M14.5 59.7H16.9" stroke="#e2e2e2" stroke-width="1.3"/><path d="M12.4 52.1L10.4 55.3H14.4z M12.4 67.3L10.4 64.1H14.4z M4.8 59.7L8 57.7V61.7z M20 59.7L16.8 57.7V61.7z" fill="#e2e2e2"/><path d="M6.8 81.2A6.2 6.2 0 0 1 18.2 80.4M18 84.4A6.2 6.2 0 0 1 6.6 85" stroke="#d8d8d8" stroke-width="1.1" fill="none"/><path d="M4.4 81.6H8.8L6.6 84.6z M16 84H20.4L18.2 80.8z" fill="#e2e2e2"/><rect x="10.6" y="80.9" width="3.6" height="3.6" transform="rotate(45 12.4 82.7)" fill="#a8a8a8"/><rect x="6.9" y="99.9" width="11.4" height="10.8" stroke="#a0a0a0" stroke-width="1" fill="none"/><rect x="6.5" y="104.9" width="6.4" height="6.2" fill="#e2e2e2"/><path d="M13.4 104.4L17.4 100.6" stroke="#e2e2e2" stroke-width="1.1"/><circle cx="17" cy="101" r="1.1" fill="#e2e2e2"/><path d="M22 114.5L24 112.5V114.5z" fill="#cfcfcf"/><circle cx="12.4" cy="127.9" r="6.9" stroke="#cfcfcf" stroke-width="1" fill="none"/><rect x="9.5" y="125" width="5.8" height="5.8" fill="#e2e2e2"/><path d="M12.4 120.4L11 122.2H13.8z M12.4 135.4L11 133.6H13.8z M4.9 127.9L6.7 126.5V129.3z M19.9 127.9L18.1 126.5V129.3z" fill="#cfcfcf"/><path d="M5.6 156.2L14.2 147.6L16.4 149.8L7.8 158.4L5 159z" fill="#e2e2e2"/><path d="M7.7 159.2C10 159.5 11.4 156 14 155.2C16.4 154.6 18.4 156.2 20.6 158.4" stroke="#9ab8a8" stroke-width="0.9" fill="none"/><path d="M23 163L25 161V163z" fill="#cfcfcf"/><path d="M10.4 182.2A8.3 8.3 0 0 0 18.7 182.2H10.4V173.9A8.3 8.3 0 0 1 18.7 182.2z" fill="#9cc0a8"/><path d="M10.4 173.9A8.3 8.3 0 0 1 18.7 182.2" stroke="#cfe0c0" stroke-width="0.7" fill="none"/><rect x="6.5" y="169" width="3.9" height="15.9" fill="#e2e2e2"/><rect x="6.5" y="182.2" width="14.4" height="2.7" fill="#e2e2e2"/><path d="M8.5 171H10.4M8.5 173.6H10.4M8.5 176.2H10.4M8.5 178.8H10.4M8.5 181.2H10.4M12.4 182.2V184M15 182.2V184M17.6 182.2V184" stroke="#444" stroke-width="0.6"/><path d="M6.9 200.6L9.9 197.6H20.4V207.2L17.4 210.2H6.9z" stroke="#c8c8c8" stroke-width="0.9" fill="none"/><path d="M6.9 200.6H17.4V210.2M17.4 200.6L20.4 197.6" stroke="#c8c8c8" stroke-width="0.9" fill="none"/><path d="M6 194.4V199M3.7 196.7H8.3" stroke="#c8d8a0" stroke-width="1.2"/><path d="M22.5 212.5L24.5 210.5V212.5z" fill="#cfcfcf"/></svg>
<svg class="a" style="left:0;top:0" width="1027" height="640" viewBox="0 0 1027 640"><path d="M563.6 64.3V43.0M563.6 64.3V85.3" stroke="#4d7fd0" stroke-width="1.3"/><path d="M563.6 64.3H584.4M563.6 64.3H542.6" stroke="#d84050" stroke-width="1.3"/><circle cx="563.6" cy="85.3" r="4.9" fill="#6f8fc8"/><circle cx="542.6" cy="64.3" r="4.9" fill="#c8a0a4" stroke="#e04050" stroke-width="0.8" stroke-dasharray="1 0.8"/><circle cx="563.6" cy="43.0" r="5" fill="#4b80d6"/><circle cx="584.4" cy="64.3" r="5" fill="#d83a4c"/><circle cx="563.6" cy="64.3" r="5" fill="#c8b040"/><text x="563.6" y="45.599999999999994" font-family="Liberation Sans" font-size="7" fill="#222" text-anchor="middle">Z</text><text x="584.4" y="66.89999999999999" font-family="Liberation Sans" font-size="7" fill="#6a1a20" text-anchor="middle">X</text><text x="563.9" y="66.89999999999999" font-family="Liberation Sans" font-size="7" fill="#4a3a10" text-anchor="middle">-Y</text></svg>
<svg class="a" style="left:0;top:0" width="1027" height="640" viewBox="0 0 1027 640"><path d="M996.5 64.3V43.0M996.5 64.3V85.3" stroke="#4d7fd0" stroke-width="1.3"/><path d="M996.5 64.3H1017.3M996.5 64.3H975.5" stroke="#c0b040" stroke-width="1.3"/><circle cx="996.5" cy="85.3" r="4.9" fill="#6f8fc8"/><circle cx="975.5" cy="64.3" r="4.9" fill="#b8c090"/><circle cx="996.5" cy="43.0" r="5" fill="#4b80d6"/><circle cx="1017.3" cy="64.3" r="5" fill="#c8b040"/><circle cx="996.5" cy="64.3" r="5" fill="#d83a4c"/><text x="996.5" y="45.599999999999994" font-family="Liberation Sans" font-size="7" fill="#222" text-anchor="middle">Z</text><text x="1017.3" y="66.89999999999999" font-family="Liberation Sans" font-size="7" fill="#2a2a10" text-anchor="middle">Y</text><text x="996.5" y="66.89999999999999" font-family="Liberation Sans" font-size="7" fill="#4a1010" text-anchor="middle">X</text></svg>
<svg class="a" style="left:0;top:0" width="1027" height="640" viewBox="0 0 1027 640"><circle cx="581.8" cy="99.9" r="8.7" fill="#727272" fill-opacity="0.9"/><circle cx="581.8" cy="119.3" r="8.7" fill="#727272" fill-opacity="0.9"/><circle cx="581.8" cy="138.8" r="8.7" fill="#727272" fill-opacity="0.9"/><circle cx="581.8" cy="158.3" r="8.7" fill="#727272" fill-opacity="0.9"/><circle cx="583.0" cy="98.5" r="3.6" fill="#f0f0f0"/><path d="M581.0 100.7L577.5999999999999 104.10000000000001" stroke="#f0f0f0" stroke-width="1.6"/><path d="M583.0 96.5V100.5M581.0 98.5H585.0" stroke="#777" stroke-width="0.7"/><path d="M578.5999999999999 119.8L578.1999999999999 115.7L579.1999999999999 115.5L580.0 117.89999999999999L580.1999999999999 114.5L581.3 114.39999999999999L581.8 117.7L582.4 114.3L583.4 114.5L583.4 117.89999999999999L584.4 115.3L585.4 115.7L584.8 120.3L586.5999999999999 118.7L587.0 119.7L583.8 123.89999999999999H579.8z" fill="#f0f0f0"/><circle cx="579.5999999999999" cy="136.60000000000002" r="2.2" fill="#f0f0f0"/><circle cx="583.8" cy="136.60000000000002" r="2.2" fill="#f0f0f0"/><rect x="578.0" y="138.4" width="6.4" height="4.2" fill="#f0f0f0"/><path d="M584.4 140.4L586.8 138.4V142.60000000000002z" fill="#f0f0f0"/><rect x="577.1999999999999" y="153.70000000000002" width="9.2" height="9.2" stroke="#f0f0f0" stroke-width="0.9" fill="none"/><path d="M580.3 153.70000000000002V162.9M583.3 153.70000000000002V162.9M577.1999999999999 156.8H586.4M577.1999999999999 159.8H586.4" stroke="#f0f0f0" stroke-width="0.8"/></svg>
<svg class="a" style="left:0;top:0" width="1027" height="640" viewBox="0 0 1027 640"><circle cx="1014.5" cy="99.9" r="8.7" fill="#727272" fill-opacity="0.9"/><circle cx="1014.5" cy="119.3" r="8.7" fill="#727272" fill-opacity="0.9"/><circle cx="1014.5" cy="138.8" r="8.7" fill="#727272" fill-opacity="0.9"/><circle cx="1014.5" cy="158.3" r="8.7" fill="#727272" fill-opacity="0.9"/><circle cx="1015.7" cy="98.5" r="3.6" fill="#f0f0f0"/><path d="M1013.7 100.7L1010.3 104.10000000000001" stroke="#f0f0f0" stroke-width="1.6"/><path d="M1015.7 96.5V100.5M1013.7 98.5H1017.7" stroke="#777" stroke-width="0.7"/><path d="M1011.3 119.8L1010.9 115.7L1011.9 115.5L1012.7 117.89999999999999L1012.9 114.5L1014.0 114.39999999999999L1014.5 117.7L1015.1 114.3L1016.1 114.5L1016.1 117.89999999999999L1017.1 115.3L1018.1 115.7L1017.5 120.3L1019.3 118.7L1019.7 119.7L1016.5 123.89999999999999H1012.5z" fill="#f0f0f0"/><circle cx="1012.3" cy="136.60000000000002" r="2.2" fill="#f0f0f0"/><circle cx="1016.5" cy="136.60000000000002" r="2.2" fill="#f0f0f0"/><rect x="1010.7" y="138.4" width="6.4" height="4.2" fill="#f0f0f0"/><path d="M1017.1 140.4L1019.5 138.4V142.60000000000002z" fill="#f0f0f0"/><rect x="1009.9" y="153.70000000000002" width="9.2" height="9.2" stroke="#f0f0f0" stroke-width="0.9" fill="none"/><path d="M1013.0 153.70000000000002V162.9M1016.0 153.70000000000002V162.9M1009.9 156.8H1019.1M1009.9 159.8H1019.1" stroke="#f0f0f0" stroke-width="0.8"/></svg>
<div class="a" style="left:591.3px;top:42.2px;width:4.7000000000000455px;height:8.199999999999996px;background:#8c8c8c;border-radius:1.5px;"></div>
<svg class="a" style="left:591.3px;top:42.2px;" width="5" height="8.2" viewBox="0 0 5 8.2"><path d="M3.6 2L1.6 4.1L3.6 6.2" stroke="#d8d8d8" stroke-width="0.9" fill="none"/></svg>
<div class="a" style="left:1024.2px;top:41.6px;width:4.7999999999999545px;height:9.0px;background:#8c8c8c;border-radius:1.5px;"></div>
<div class="a" style="left:0px;top:529.5px;width:1027px;height:16.299999999999955px;background:#2e2e2e;border-radius:0px;"></div>
<div class="a" style="left:0px;top:545.8px;width:1027px;height:14.200000000000045px;background:#1c1c1c;border-radius:0px;"></div>
<div class="a" style="left:0px;top:560px;width:1027px;height:51.5px;background:#1f1f1f;border-radius:0px;"></div>
<div class="a" style="left:218px;top:560px;width:216px;height:44px;background:#2b2b2b;border-radius:0px;"></div>
<div class="a" style="left:254px;top:560px;width:1px;height:44px;background:#353535;border-radius:0px;"></div>
<div class="a" style="left:884.5px;top:546px;width:142.5px;height:65.5px;background:#1e1e1e;border-radius:0px;"></div>
<div class="a" style="left:883px;top:552px;width:1.5px;height:45px;background:#383838;border-radius:0px;"></div>
<div class="a" style="left:0px;top:609.2px;width:1027px;height:3.0px;background:#151515;border-radius:0px;"></div>
<div class="a" style="left:0px;top:612.2px;width:1027px;height:15.699999999999932px;background:#2e2e2e;border-radius:0px;"></div>
<div class="a" style="left:0px;top:627.9px;width:1027px;height:12.100000000000023px;background:#1e1e1e;border-radius:0px;"></div>
<div class="a" style="left:5.6px;top:532.4px;width:18.4px;height:10.200000000000045px;background:#262626;border-radius:2px;"></div>
<svg class="a" style="left:5.6px;top:532.4px;" width="19" height="10.2" viewBox="0 0 19 10.2"><rect x="2.4" y="1.4" width="7.5" height="2.4" fill="#8a8a8a"/><circle cx="2.4" cy="2.6" r="1.5" fill="#f0f0f0"/><circle cx="9.9" cy="2.6" r="1.5" fill="#f0f0f0"/><rect x="4.3" y="6.4" width="3" height="3" transform="rotate(45 5.8 7.9)" stroke="#e0e0e0" stroke-width="0.9" fill="none"/></svg>
<svg class="a" style="left:17.8px;top:537.1px;" width="6" height="4" viewBox="0 0 6 4"><path d="M0.7 0.8L2.9 3L5.1 0.8" stroke="#bdbdbd" stroke-width="1" fill="none"/></svg>
<div class="a" style="left:29.7px;top:532.4px;width:77.89999999999999px;height:10.200000000000045px;background:#262626;border-radius:2px;"></div>
<svg class="a" style="left:31px;top:533px;" width="11" height="10" viewBox="0 0 11 10"><path d="M0.5 2.5V0.5H2.5M7.5 0.5H9.5V2.5M9.5 7.5V9.5H7.5M2.5 9.5H0.5V7.5" stroke="#aaa" stroke-width="0.9" fill="none"/><rect x="2.4" y="2.2" width="5.4" height="5.4" fill="#e6e6e6"/></svg>
<div class="t" style="left:45px;top:534.59px;font-size:8.1px;line-height:8.1px;color:#d8d8d8;">Action Editor</div>
<svg class="a" style="left:100.5px;top:536.9px;" width="6" height="4" viewBox="0 0 6 4"><path d="M0.7 0.8L2.9 3L5.1 0.8" stroke="#bdbdbd" stroke-width="1" fill="none"/></svg>
<div class="t" style="left:116.1px;top:534.59px;font-size:8.1px;line-height:8.1px;color:#d8d8d8;">View</div>
<div class="t" style="left:141.2px;top:534.59px;font-size:8.1px;line-height:8.1px;color:#d8d8d8;">Select</div>
<div class="t" style="left:171px;top:534.59px;font-size:8.1px;line-height:8.1px;color:#d8d8d8;">Marker</div>
<div class="t" style="left:202.5px;top:534.59px;font-size:8.1px;line-height:8.1px;color:#d8d8d8;">Key</div>
<div class="a" style="left:223.9px;top:532.4px;width:24.5px;height:11.0px;background:#3c3c3c;border-radius:2px;"></div>
<svg class="a" style="left:223.9px;top:532.4px;" width="25" height="11" viewBox="0 0 25 11"><path d="M3 3.8H8.2L5.6 7z" fill="#7a7a7a"/><path d="M16.2 7H21.4L18.8 3.8z" fill="#7a7a7a"/></svg>
<div class="a" style="left:253.1px;top:531.9px;width:96.9px;height:12.200000000000045px;background:#3c3c3c;border-radius:2px;"></div>
<svg class="a" style="left:254px;top:532px;" width="100" height="12" viewBox="0 0 100 12"><path d="M4.5 1L7 3H2z" fill="#888" transform="rotate(180 4.5 2)"/><path d="M1.5 5H8M2 7H7.5M1.5 9.5H8" stroke="#888" stroke-width="0.8"/><path d="M61 2V10M57 6H65M58.2 3.2L63.8 8.8M63.8 3.2L58.2 8.8" stroke="#888" stroke-width="0.8"/></svg>
<div class="t" style="left:269.8px;top:535.19px;font-size:8.1px;line-height:8.1px;color:#8a8a8a;">Push Down</div>
<div class="t" style="left:326.7px;top:535.19px;font-size:8.1px;line-height:8.1px;color:#8a8a8a;">Stash</div>
<div class="a" style="left:458.6px;top:532.4px;width:19.19999999999999px;height:11.399999999999977px;background:#262626;border-radius:2px;"></div>
<svg class="a" style="left:458.6px;top:532.4px;" width="19" height="11" viewBox="0 0 19 11"><rect x="3.4" y="1.2" width="7" height="2.6" fill="#8a8a8a"/><circle cx="3.6" cy="2.5" r="1.5" fill="#f0f0f0"/><circle cx="10.4" cy="2.5" r="1.5" fill="#f0f0f0"/><rect x="5" y="5.8" width="3.2" height="3.2" transform="rotate(45 6.6 7.4)" stroke="#e0e0e0" stroke-width="0.9" fill="none"/></svg>
<svg class="a" style="left:471px;top:537.6px;" width="6" height="4" viewBox="0 0 6 4"><path d="M0.7 0.8L2.9 3L5.1 0.8" stroke="#bdbdbd" stroke-width="1" fill="none"/></svg>
<div class="a" style="left:477.8px;top:532.4px;width:77.99999999999994px;height:11.399999999999977px;background:#545454;border-radius:2px;"></div>
<svg class="a" style="left:481px;top:532.5px;" width="10" height="10" viewBox="0 0 10 10"><path d="M4.8 2V8M1.8 5H7.8" stroke="#e8e8e8" stroke-width="1.1"/></svg>
<div class="t" style="left:516px;top:535.39px;font-size:8.1px;line-height:8.1px;color:#e0e0e0;">New</div>
<div class="a" style="left:849.1px;top:532.6px;width:37.299999999999955px;height:10.899999999999977px;background:#444444;border-radius:2px;"></div>
<div class="a" style="left:889.5px;top:532.6px;width:22.5px;height:10.899999999999977px;background:#232323;border-radius:2px;"></div>
<svg class="a" style="left:849.1px;top:532.6px;" width="38" height="11" viewBox="0 0 38 11"><path d="M2.2 1.8L10.2 5.2L6.6 6.4L5.4 10z" fill="#e8e8e8"/><path d="M15 3.5V1.8H17M21.5 1.8H23.6V3.5M23.6 7.5V9.4H21.5M17 9.4H15V7.5" stroke="#ccc" stroke-width="0.9" fill="none"/><rect x="16.8" y="3.6" width="5" height="4" stroke="#888" stroke-width="0.6" fill="none"/><path d="M31.5 1.2L36.5 10H26.5z" fill="#e8e8e8"/><rect x="31" y="4" width="1" height="3.5" fill="#333"/><rect x="31" y="8" width="1" height="1" fill="#333"/></svg>
<svg class="a" style="left:891.5px;top:532.6px;" width="12" height="11" viewBox="0 0 12 11"><path d="M0.8 1.5H10.2L6.5 5.8V10.2L4.5 8.5V5.8z" stroke="#e0e0e0" stroke-width="1" fill="none"/></svg>
<svg class="a" style="left:904px;top:537px;" width="6" height="4" viewBox="0 0 6 4"><path d="M0.7 0.8L2.9 3L5.1 0.8" stroke="#bdbdbd" stroke-width="1" fill="none"/></svg>
<div class="a" style="left:916.5px;top:532.6px;width:72.0px;height:10.899999999999977px;background:#262626;border-radius:2px;"></div>
<div class="t" style="left:920px;top:535.19px;font-size:8.1px;line-height:8.1px;color:#d8d8d8;">Nearest Frame</div>
<svg class="a" style="left:980.5px;top:536.9px;" width="6" height="4" viewBox="0 0 6 4"><path d="M0.7 0.8L2.9 3L5.1 0.8" stroke="#bdbdbd" stroke-width="1" fill="none"/></svg>
<div class="a" style="left:991.2px;top:532.6px;width:11.799999999999955px;height:10.899999999999977px;background:#4a4a4a;border-radius:2px;"></div>
<svg class="a" style="left:991.2px;top:532.6px;" width="12" height="11" viewBox="0 0 12 11"><circle cx="5.9" cy="5.5" r="1.3" fill="#cfcfcf"/><circle cx="5.9" cy="5.5" r="3.8" stroke="#777" stroke-width="0.6" fill="none"/></svg>
<svg class="a" style="left:1005px;top:532.6px;" width="12" height="11" viewBox="0 0 12 11"><path d="M0.8 10C3 9.5 3.4 2 5.2 1.5C7 2 7.4 9.5 9.8 10" stroke="#999" stroke-width="0.9" fill="none"/></svg>
<svg class="a" style="left:1019px;top:537px;" width="6" height="4" viewBox="0 0 6 4"><path d="M0.7 0.8L2.9 3L5.1 0.8" stroke="#555" stroke-width="1" fill="none"/></svg>
<div class="a" style="left:1.3px;top:546.8px;width:111.4px;height:12.600000000000023px;background:#181818;border-radius:0px;"></div>
<svg class="a" style="left:2px;top:547px;" width="12" height="12" viewBox="0 0 12 12"><circle cx="7" cy="4.5" r="3.2" stroke="#cfcfcf" stroke-width="1" fill="none"/><path d="M4.8 6.8L1.4 10.6" stroke="#cfcfcf" stroke-width="1.1"/></svg>
<div class="a" style="left:112.7px;top:547.2px;width:14.5px;height:11.799999999999955px;background:#505050;border-radius:1.5px;"></div>
<svg class="a" style="left:112.7px;top:547.2px;" width="14.5" height="12" viewBox="0 0 14.5 12"><path d="M3 6H11.5" stroke="#e0e0e0" stroke-width="0.9"/><path d="M2 6L4.6 3.8V8.2z M12.5 6L9.9 3.8V8.2z" fill="#e0e0e0"/></svg>
<div class="t" style="left:141.02000000000004px;top:549.85px;font-size:8.5px;line-height:8.5px;color:#b9b9b9;">-10</div>
<div class="t" style="left:178.93500000000003px;top:549.85px;font-size:8.5px;line-height:8.5px;color:#b9b9b9;">-5</div>
<div class="t" style="left:251.845px;top:549.85px;font-size:8.5px;line-height:8.5px;color:#b9b9b9;">5</div>
<div class="t" style="left:285.59000000000003px;top:549.85px;font-size:8.5px;line-height:8.5px;color:#b9b9b9;">10</div>
<div class="t" style="left:321.42px;top:549.85px;font-size:8.5px;line-height:8.5px;color:#b9b9b9;">15</div>
<div class="t" style="left:357.25px;top:549.85px;font-size:8.5px;line-height:8.5px;color:#b9b9b9;">20</div>
<div class="t" style="left:393.08000000000004px;top:549.85px;font-size:8.5px;line-height:8.5px;color:#b9b9b9;">25</div>
<div class="t" style="left:428.91px;top:549.85px;font-size:8.5px;line-height:8.5px;color:#b9b9b9;">30</div>
<div class="t" style="left:464.74px;top:549.85px;font-size:8.5px;line-height:8.5px;color:#b9b9b9;">35</div>
<div class="t" style="left:500.57px;top:549.85px;font-size:8.5px;line-height:8.5px;color:#b9b9b9;">40</div>
<div class="t" style="left:536.4px;top:549.85px;font-size:8.5px;line-height:8.5px;color:#b9b9b9;">45</div>
<div class="t" style="left:572.23px;top:549.85px;font-size:8.5px;line-height:8.5px;color:#b9b9b9;">50</div>
<div class="t" style="left:608.0600000000001px;top:549.85px;font-size:8.5px;line-height:8.5px;color:#b9b9b9;">55</div>
<div class="t" style="left:643.89px;top:549.85px;font-size:8.5px;line-height:8.5px;color:#b9b9b9;">60</div>
<div class="t" style="left:679.72px;top:549.85px;font-size:8.5px;line-height:8.5px;color:#b9b9b9;">65</div>
<div class="t" style="left:715.5500000000001px;top:549.85px;font-size:8.5px;line-height:8.5px;color:#b9b9b9;">70</div>
<div class="t" style="left:751.38px;top:549.85px;font-size:8.5px;line-height:8.5px;color:#b9b9b9;">75</div>
<div class="t" style="left:787.2099999999999px;top:549.85px;font-size:8.5px;line-height:8.5px;color:#b9b9b9;">80</div>
<div class="t" style="left:823.0400000000001px;top:549.85px;font-size:8.5px;line-height:8.5px;color:#b9b9b9;">85</div>
<div class="t" style="left:858.87px;top:549.85px;font-size:8.5px;line-height:8.5px;color:#b9b9b9;">90</div>
<div class="a" style="left:210.8px;top:548.2px;width:14.899999999999977px;height:10.5px;background:#4772b3;border-radius:2.5px;"></div>
<div class="t" style="left:216.1px;top:549.85px;font-size:8.5px;line-height:8.5px;color:#ffffff;">0</div>
<div class="a" style="left:217.5px;top:558.5px;width:1.5px;height:52.5px;background:#4a7ad0;border-radius:0px;"></div>
<div class="a" style="left:135px;top:604px;width:746px;height:5px;background:#555555;border-radius:2.5px;"></div>
<div class="a" style="left:881px;top:604px;width:146px;height:5px;background:#1d1d1d;border-radius:0px;"></div>
<svg class="a" style="left:284.5px;top:572px;" width="11" height="14" viewBox="0 0 11 14"><path d="M1.2 1V11.6L3.6 9.3L5.5 13.2L7.3 12.4L5.5 8.6H8.9z" fill="#f8f8f8" stroke="#333" stroke-width="0.5"/></svg>
<div class="a" style="left:5px;top:613.5px;width:20px;height:13.5px;background:#262626;border-radius:2px;"></div>
<svg class="a" style="left:6.5px;top:615.5px;" width="12" height="12" viewBox="0 0 12 12"><circle cx="5" cy="5.5" r="4.8" fill="#f0f0f0"/><path d="M6.6 2.6L4.6 5.5L6.3 8.2" stroke="#333" stroke-width="1" fill="none"/></svg>
<svg class="a" style="left:17.8px;top:619.8px;" width="6" height="4" viewBox="0 0 6 4"><path d="M0.7 0.8L2.9 3L5.1 0.8" stroke="#bdbdbd" stroke-width="1" fill="none"/></svg>
<div class="a" style="left:30.7px;top:614.4px;width:42.3px;height:11.600000000000023px;background:#262626;border-radius:2px;"></div>
<div class="t" style="left:33px;top:617.89px;font-size:8.1px;line-height:8.1px;color:#d8d8d8;">Playback</div>
<svg class="a" style="left:67px;top:619.4px;" width="6" height="4" viewBox="0 0 6 4"><path d="M0.7 0.8L2.9 3L5.1 0.8" stroke="#bdbdbd" stroke-width="1" fill="none"/></svg>
<div class="a" style="left:74.5px;top:614.4px;width:36.5px;height:11.600000000000023px;background:#262626;border-radius:2px;"></div>
<div class="t" style="left:77.4px;top:617.89px;font-size:8.1px;line-height:8.1px;color:#d8d8d8;">Keying</div>
<svg class="a" style="left:104px;top:619.4px;" width="6" height="4" viewBox="0 0 6 4"><path d="M0.7 0.8L2.9 3L5.1 0.8" stroke="#bdbdbd" stroke-width="1" fill="none"/></svg>
<div class="t" style="left:116.9px;top:617.89px;font-size:8.1px;line-height:8.1px;color:#d8d8d8;">View</div>
<div class="t" style="left:142.6px;top:617.89px;font-size:8.1px;line-height:8.1px;color:#d8d8d8;">Marker</div>
<div class="a" style="left:454px;top:614.9px;width:12.300000000000011px;height:12.300000000000068px;background:#4772b3;border-radius:2px;"></div>
<svg class="a" style="left:454px;top:614.9px;" width="12.3" height="12.3" viewBox="0 0 12.3 12.3"><circle cx="6.15" cy="6.15" r="2.8" fill="#ffffff"/></svg>
<div class="a" style="left:466.3px;top:614.9px;width:11.699999999999989px;height:12.300000000000068px;background:#262626;border-radius:2px;"></div>
<svg class="a" style="left:469.2px;top:619.8px;" width="6" height="4" viewBox="0 0 6 4"><path d="M0.7 0.8L2.9 3L5.1 0.8" stroke="#bdbdbd" stroke-width="1" fill="none"/></svg>
<div class="a" style="left:483px;top:614.9px;width:77.60000000000002px;height:12.300000000000068px;background:#484848;border-radius:2px;"></div>
<svg class="a" style="left:483px;top:614.9px;" width="78" height="12.3" viewBox="0 0 78 12.3"><rect x="5" y="2.8" width="1.2" height="6.5" fill="#ddd"/><path d="M6.6 6.05L10.2 3V9.1z" fill="#ddd"/><path d="M14 6.05L16.5 3.3L19 6.05L16.5 8.8z" fill="#ddd"/><path d="M19.5 6.05L23.5 3V9.1z" fill="#ddd"/><path d="M28 6.05L35.5 2.5V9.6z" fill="#ddd"/><path d="M41.5 2.5L49 6.05L41.5 9.6z" fill="#ddd"/><path d="M54 3L58 6.05L54 9.1z" fill="#ddd"/><path d="M58.5 6.05L61 3.3L63.5 6.05L61 8.8z" fill="#ddd"/><path d="M68 3L71.6 6.05L68 9.1z" fill="#ddd"/><rect x="72" y="2.8" width="1.2" height="6.5" fill="#ddd"/></svg>
<div class="a" style="left:849.2px;top:615.2px;width:47.39999999999998px;height:11.599999999999909px;background:#525252;border-radius:2px;"></div>
<div class="t" style="left:870px;top:617.89px;font-size:8.1px;line-height:8.1px;color:#e0e0e0;">0</div>
<div class="a" style="left:899.6px;top:615.2px;width:124.99999999999989px;height:11.599999999999909px;background:#525252;border-radius:2px;"></div>
<svg class="a" style="left:901.5px;top:615.2px;" width="12" height="12" viewBox="0 0 12 12"><circle cx="5.8" cy="6.8" r="3.8" stroke="#e8e8e8" stroke-width="1" fill="none"/><path d="M5.8 4.6V6.8H7.6M4.6 1.6H7M9.2 2.8L10.2 3.8" stroke="#e8e8e8" stroke-width="0.9" fill="none"/></svg>
<div class="t" style="left:922.8px;top:617.89px;font-size:8.1px;line-height:8.1px;color:#e0e0e0;">Start</div>
<div class="t" style="left:957px;top:617.89px;font-size:8.1px;line-height:8.1px;color:#e0e0e0;">0</div>
<div class="t" style="left:980.7px;top:617.89px;font-size:8.1px;line-height:8.1px;color:#e0e0e0;">End</div>
<div class="t" style="left:1006.5px;top:617.89px;font-size:8.1px;line-height:8.1px;color:#e0e0e0;">30</div>
<svg class="a" style="left:6px;top:629.5px;" width="9" height="11" viewBox="0 0 9 11"><rect x="1" y="0.8" width="6.2" height="9.2" rx="2.4" stroke="#9a9a9a" stroke-width="0.8" fill="none"/><rect x="1.4" y="1.2" width="2.6" height="3.6" fill="#bbb"/></svg>
<div class="t" style="left:21px;top:631.99px;font-size:8.1px;line-height:8.1px;color:#8c8c8c;">Change Frame</div>
<svg class="a" style="left:144px;top:629.5px;" width="9" height="11" viewBox="0 0 9 11"><rect x="1" y="0.8" width="6.2" height="9.2" rx="2.4" stroke="#9a9a9a" stroke-width="0.8" fill="none"/><rect x="3.4" y="1.5" width="1.4" height="3" fill="#bbb"/></svg>
<div class="t" style="left:157.8px;top:631.99px;font-size:8.1px;line-height:8.1px;color:#8c8c8c;">Pan View</div>
<svg class="a" style="left:281px;top:629.5px;" width="9" height="11" viewBox="0 0 9 11"><rect x="1" y="0.8" width="6.2" height="9.2" rx="2.4" stroke="#9a9a9a" stroke-width="0.8" fill="none"/><rect x="4.2" y="1.2" width="2.6" height="3.6" fill="#bbb"/></svg>
<div class="t" style="left:295.5px;top:631.99px;font-size:8.1px;line-height:8.1px;color:#8c8c8c;">Dope Sheet Context Menu</div>
</body></html>
